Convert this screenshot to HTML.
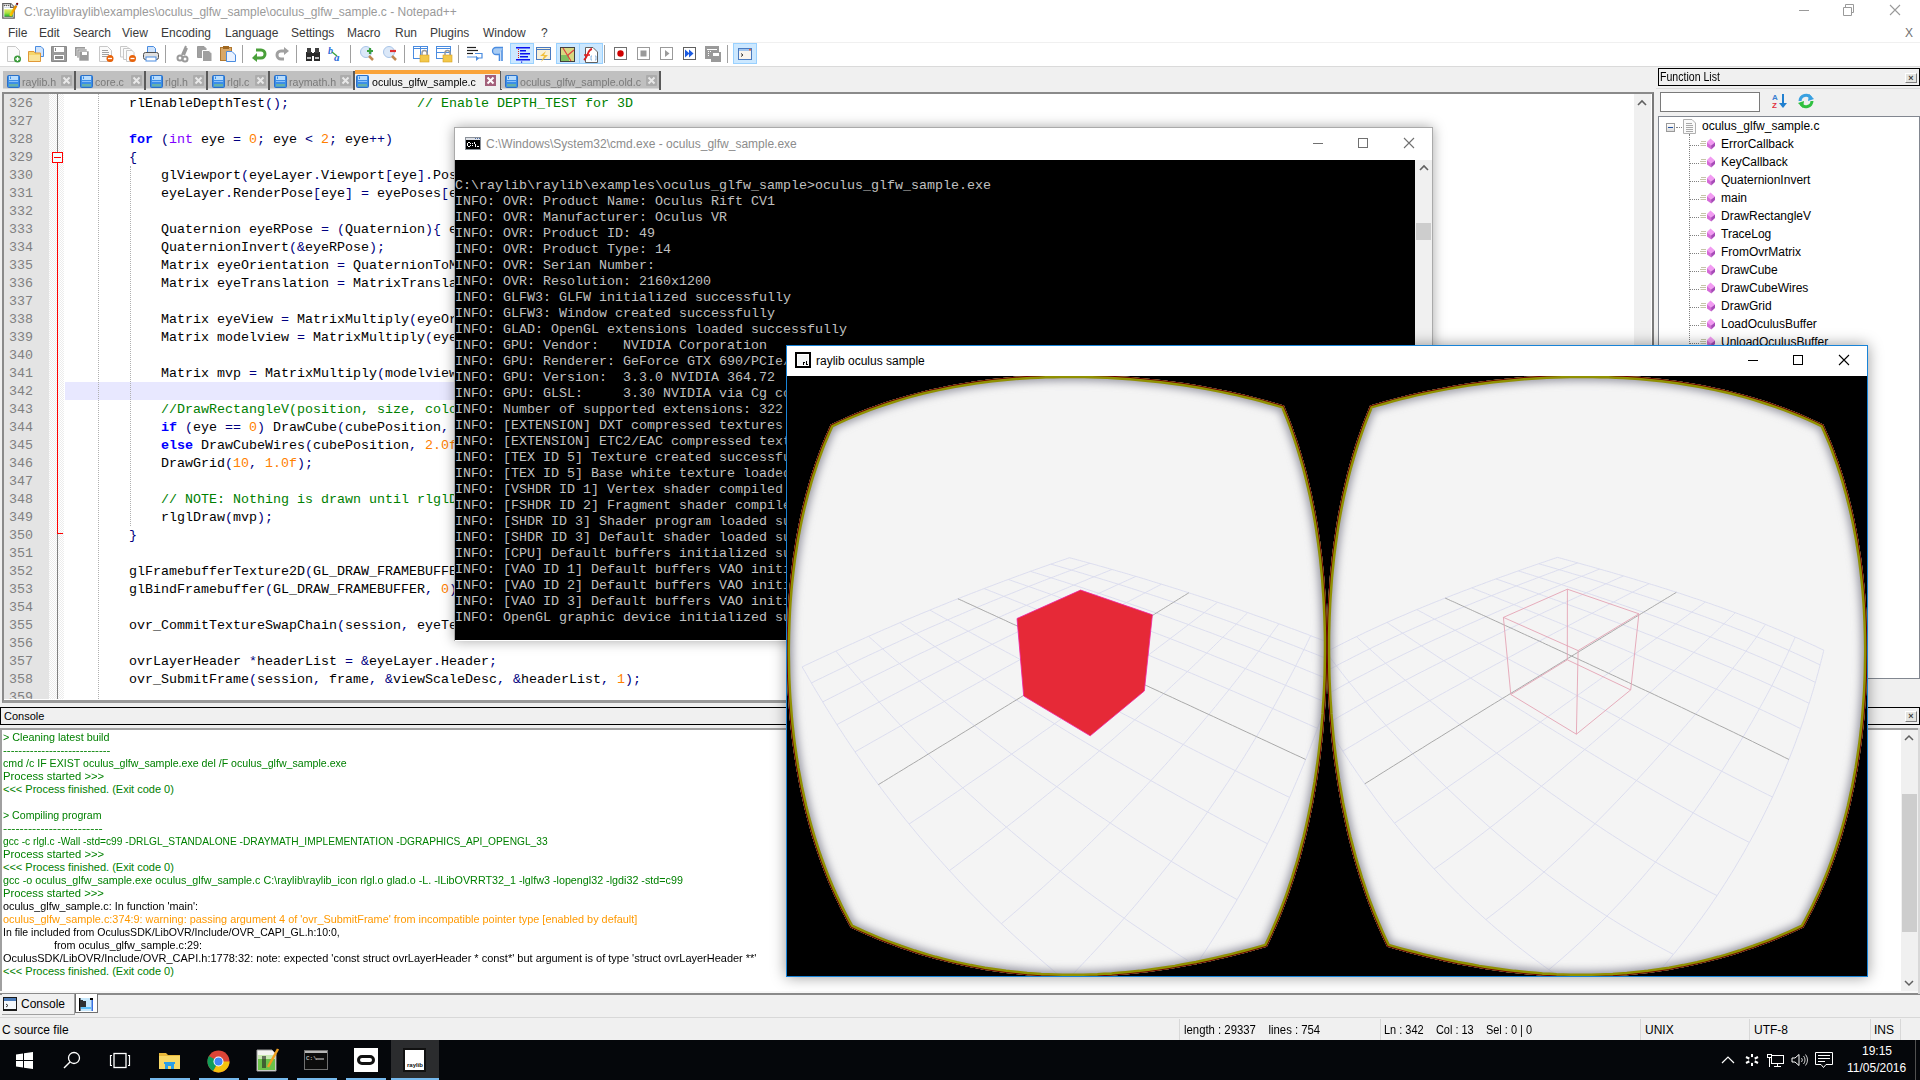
<!DOCTYPE html>
<html><head><meta charset="utf-8">
<style>
*{box-sizing:border-box}
html,body{margin:0;padding:0}
body{width:1920px;height:1080px;position:relative;overflow:hidden;background:#f0f0f0;font-family:"Liberation Sans",sans-serif;}
.a{position:absolute}
.mono{font-family:"Liberation Mono",monospace}
#title{left:0;top:0;width:1920px;height:42px;background:#fff}
#menu span{position:absolute;top:26px;font-size:12px;color:#3a3a3a}
#toolbar{left:0;top:43px;width:1920px;height:24px;background:#fff;border-bottom:1px solid #dadada}
.code{position:absolute;left:65px;height:18px;line-height:20px;font-size:13.33px;white-space:pre;font-family:"Liberation Mono",monospace;color:#000}
.ln{position:absolute;left:3px;width:30px;text-align:right;height:18px;line-height:20px;font-size:13.33px;font-family:"Liberation Mono",monospace;color:#808080}
.kw{color:#0000ff;font-weight:bold}
.ty{color:#8000ff}
.nu{color:#ff8000}
.op{color:#000080;font-weight:normal}
i{font-style:normal}
.cm{color:#008000}
.con{position:absolute;left:3px;height:13px;line-height:13px;font-size:11px;white-space:pre;color:#008000;transform-origin:0 0}
.fl{left:1721px;font-size:12px;line-height:16px;color:#000}
.cmdl{position:absolute;left:455px;height:16px;line-height:16px;font-size:13.33px;white-space:pre;font-family:"Liberation Mono",monospace;color:#c0c0c0}
</style></head><body>
<!-- Notepad++ title/menu -->
<div class="a" id="title"></div>
<svg class="a" style="left:0;top:0" width="22" height="22"><defs><linearGradient id="npg" x1="0" y1="0" x2="0" y2="1"><stop offset="0" stop-color="#e4e860"/><stop offset="0.5" stop-color="#a8e040"/><stop offset="0.85" stop-color="#40c030"/><stop offset="1" stop-color="#005000"/></linearGradient><linearGradient id="npp" x1="0" y1="0" x2="1" y2="0"><stop offset="0" stop-color="#ffd000"/><stop offset="1" stop-color="#e08000"/></linearGradient></defs>
<path d="M2.8 3.6H10.8L14.2 7V18.2H2.8Z" fill="#fff" stroke="#606060" stroke-width="1.3"/><path d="M10.5 3.6V7.4H14.2" fill="#f0f0f0" stroke="#606060" stroke-width="1.2"/>
<g fill="#606060"><circle cx="4.5" cy="5.5" r="0.8"/><circle cx="6.5" cy="5.5" r="0.8"/><circle cx="8.6" cy="5.5" r="0.8"/></g>
<rect x="4.3" y="7.2" width="5.5" height="0.8" fill="#c8d8e8"/>
<rect x="4.3" y="9.3" width="8.6" height="7.4" fill="url(#npg)"/>
<path d="M10.3 15.8L16.2 5.6" stroke="url(#npp)" stroke-width="2.6"/><path d="M16.2 5.6L17.2 3.8" stroke="#7090c0" stroke-width="2"/><circle cx="17.2" cy="3.8" r="1.1" fill="#800000"/></svg>
<div class="a" style="left:1799px;top:10px;width:10px;height:1px;background:#9a9a9a"></div>
<svg class="a" style="left:1843px;top:4px" width="12" height="12"><path d="M2.5 3.5V0.5H10.5V8.5H8.5 M0.5 3.5H8.5V11.5H0.5Z" fill="none" stroke="#9a9a9a"/></svg>
<svg class="a" style="left:1889px;top:4px" width="12" height="12"><path d="M1 1L11 11M11 1L1 11" stroke="#9a9a9a" stroke-width="1.1"/></svg>
<div class="a" style="left:1905px;top:25px;font-size:12px;line-height:16px;color:#707070">X</div>
<div class="a" style="left:24px;top:4px;font-size:12px;color:#9a9a9a;line-height:16px">C:\raylib\raylib\examples\oculus_glfw_sample\oculus_glfw_sample.c - Notepad++</div>
<div class="a" style="left:0;top:42px;width:1920px;height:1px;background:#f0f0f0"></div>
<div id="menu">
<span style="left:8px">File</span><span style="left:39px">Edit</span><span style="left:73px">Search</span><span style="left:122px">View</span><span style="left:161px">Encoding</span><span style="left:225px">Language</span><span style="left:291px">Settings</span><span style="left:347px">Macro</span><span style="left:395px">Run</span><span style="left:430px">Plugins</span><span style="left:483px">Window</span><span style="left:541px">?</span>
</div>
<div class="a" id="toolbar"></div>
<!--TOP-->
<svg class="a" style="left:0;top:0" width="780" height="70"><g transform="translate(6,46)"><path d="M1.5 0.5H9.5L13.5 4.5V15.5H1.5Z" fill="#fbfbfb" stroke="#c8c8c8"/><circle cx="11.5" cy="13" r="3.5" fill="#3a9a3a"/><path d="M9.5 13H13.5M11.5 11V15" stroke="#fff" stroke-width="1.3"/></g><g transform="translate(28,46)"><path d="M7.5 0.5H13L15.5 3V10.5H7.5Z" fill="#cfe3fb" stroke="#4a8ce0"/><path d="M0.5 5.5H6L7 7H12.5V15.5H0.5Z" fill="#f6d66a" stroke="#e09838"/><rect x="1" y="9" width="11" height="6" fill="#fae49a"/></g><g transform="translate(51,46)"><path d="M0.5 0.5H15.5V15.5H0.5Z" fill="#9a9a9a" stroke="#8a8a8a"/><rect x="3" y="1" width="10" height="5" fill="#fff"/><rect x="4" y="2" width="1" height="3" fill="#8a8a8a"/><rect x="3" y="9" width="10" height="5" fill="#fff"/><rect x="4" y="10" width="8" height="3" fill="#8a8a8a"/></g><g transform="translate(75,47)"><rect x="0" y="0" width="10" height="9" fill="#9a9a9a"/><rect x="2" y="2" width="10" height="9" fill="#9a9a9a" stroke="#fff" stroke-width="0.6"/><rect x="4" y="4" width="10" height="10" fill="#9a9a9a" stroke="#fff" stroke-width="0.6"/><rect x="7" y="5" width="5" height="3" fill="#fff"/></g><g transform="translate(98,46)"><path d="M1.5 0.5H9.5L13.5 4.5V15.5H1.5Z" fill="#fbfbfb" stroke="#c8c8c8"/><g stroke="#a0a0a0"><line x1="4" y1="4.5" x2="10" y2="4.5"/><line x1="4" y1="6.5" x2="11" y2="6.5"/><line x1="4" y1="8.5" x2="11" y2="8.5"/><line x1="4" y1="10.5" x2="9" y2="10.5"/></g><circle cx="12" cy="12.5" r="3.5" fill="#e8620a"/><path d="M10 12.5H14" stroke="#fff" stroke-width="1.3"/></g><g transform="translate(120,46)"><path d="M0.5 0.5H7L9 2.5V11H0.5Z" fill="#fbfbfb" stroke="#c8c8c8"/><path d="M3.5 2.5H10L12 4.5V13.5H3.5Z" fill="#fbfbfb" stroke="#c8c8c8"/><path d="M6.5 4.5H12L14 6.5V15.5H6.5Z" fill="#fbfbfb" stroke="#c8c8c8"/><circle cx="12.5" cy="12.5" r="3.5" fill="#e8620a"/><path d="M10.5 12.5H14.5" stroke="#fff" stroke-width="1.3"/></g><g transform="translate(143,46)"><path d="M4.5 0.5H10.5L12.5 2.5V7H4.5Z" fill="#cfe3fb" stroke="#4a8ce0"/><rect x="0.5" y="6.5" width="15" height="7" rx="2" fill="#e0e0e0" stroke="#505050"/><rect x="3" y="11" width="10" height="4" fill="#fff" stroke="#4a8ce0"/></g><rect x="165" y="45" width="1" height="18" fill="#a0a0a0"/><g transform="translate(176,46)"><path d="M10 0L6 9M11 2L8 9" stroke="#9a9a9a" stroke-width="2"/><circle cx="4" cy="12" r="2.5" fill="none" stroke="#9a9a9a" stroke-width="2"/><circle cx="9" cy="13" r="2.5" fill="none" stroke="#9a9a9a" stroke-width="2"/></g><g transform="translate(197,46)"><path d="M0.5 0.5H7L9 2.5V11.5H0.5Z" fill="#a0a0a0" stroke="#9a9a9a"/><path d="M5.5 4.5H12L15 7.5V15.5H5.5Z" fill="#a0a0a0" stroke="#fff"/></g><g transform="translate(220,46)"><rect x="0.5" y="1.5" width="11" height="13" fill="#d8a868" stroke="#b07830"/><rect x="3" y="0" width="6" height="3" fill="#a06820"/><path d="M6.5 5.5H12L15.5 9V15.5H6.5Z" fill="#eaf2ff" stroke="#4a8ce0"/></g><rect x="242" y="45" width="1" height="18" fill="#a0a0a0"/><g transform="translate(252,47)"><path d="M3 11H9A4 4 0 0 0 9 3H4" fill="none" stroke="#4aa03a" stroke-width="3"/><path d="M0 11L5 6V15Z" fill="#4aa03a"/></g><g transform="translate(275,47)"><path d="M11 4H6A4 4 0 0 0 6 12H9" fill="none" stroke="#a0a0a0" stroke-width="3"/><path d="M14 4L9 0V8Z" fill="#a0a0a0"/></g><rect x="296" y="45" width="1" height="18" fill="#a0a0a0"/><g transform="translate(306,47)"><rect x="0" y="5" width="6" height="9" fill="#2a2a2a"/><rect x="8" y="5" width="6" height="9" fill="#2a2a2a"/><rect x="1" y="1" width="4" height="5" fill="#404040"/><rect x="9" y="1" width="4" height="5" fill="#404040"/><rect x="5" y="6" width="4" height="3" fill="#2a2a2a"/><rect x="1" y="10" width="4" height="2" fill="#c0c0c0"/><rect x="9" y="10" width="4" height="2" fill="#c0c0c0"/></g><g transform="translate(328,46)"><text x="0" y="8" font-family="Liberation Serif" font-style="italic" font-weight="bold" font-size="10" fill="#2a6ad8">b</text><text x="6" y="15" font-family="Liberation Serif" font-style="italic" font-weight="bold" font-size="11" fill="#2a6ad8">a</text><path d="M4 6L9 10" stroke="#3aa040" stroke-width="1.5"/></g><rect x="350" y="45" width="1" height="18" fill="#a0a0a0"/><g transform="translate(360,46)"><circle cx="6" cy="6" r="5.5" fill="#dbe8f8" stroke="#a8c4e8"/><path d="M9 10L13 14" stroke="#c08850" stroke-width="2.5"/><path d="M7 5H13M10 2V8" stroke="#3aa040" stroke-width="2.2"/></g><g transform="translate(383,46)"><circle cx="6" cy="6" r="5.5" fill="#dbe8f8" stroke="#a8c4e8"/><path d="M9 10L13 14" stroke="#c08850" stroke-width="2.5"/><path d="M7 5H13" stroke="#e03030" stroke-width="2.2"/></g><rect x="404" y="45" width="1" height="18" fill="#a0a0a0"/><g transform="translate(413,46)"><rect x="0.5" y="0.5" width="14" height="12" fill="#fff" stroke="#4a8ce0"/><line x1="0.5" y1="2.5" x2="14.5" y2="2.5" stroke="#4a8ce0"/><line x1="7.5" y1="0" x2="7.5" y2="13" stroke="#4a8ce0"/><rect x="7" y="9" width="9" height="7" fill="#f2c84a" stroke="#d8a020" stroke-width="0.6"/><path d="M9 9V7A2.5 2.5 0 0 1 14 7V9" fill="none" stroke="#9a9a9a" stroke-width="1.5"/></g><g transform="translate(436,46)"><rect x="0.5" y="0.5" width="14" height="12" fill="#fff" stroke="#4a8ce0"/><line x1="0.5" y1="2.5" x2="14.5" y2="2.5" stroke="#4a8ce0"/><line x1="0" y1="6.5" x2="14" y2="6.5" stroke="#4a8ce0"/><rect x="7" y="9" width="9" height="7" fill="#f2c84a" stroke="#d8a020" stroke-width="0.6"/><path d="M9 9V7A2.5 2.5 0 0 1 14 7V9" fill="none" stroke="#9a9a9a" stroke-width="1.5"/></g><rect x="458" y="45" width="1" height="18" fill="#a0a0a0"/><g transform="translate(467,46)"><g stroke="#222" stroke-width="1.2"><line x1="0" y1="1.5" x2="9" y2="1.5"/><line x1="0" y1="4.5" x2="11" y2="4.5"/><line x1="0" y1="7.5" x2="6" y2="7.5"/></g><path d="M8 7.5H15V12H9" fill="none" stroke="#4a8ce0" stroke-width="1.2"/><rect x="0" y="10" width="10" height="2" fill="#a8c8f0"/><path d="M9 10L12 12.5L9 15Z" fill="#4a8ce0"/></g><g transform="translate(490,46)"><path d="M9.5 2V15M12 2V15" stroke="#4a8ce0" stroke-width="1.6"/><path d="M13 1.5H6A3.5 3.5 0 0 0 6 8.5H9" fill="#a8ccf4" stroke="#4a8ce0" stroke-width="1.3"/></g><rect x="510.5" y="43.5" width="23" height="20" fill="#cce8ff" stroke="#99d1ff"/><rect x="556.5" y="43.5" width="23" height="20" fill="#cce8ff" stroke="#99d1ff"/><rect x="579.5" y="43.5" width="23" height="20" fill="#cce8ff" stroke="#99d1ff"/><rect x="733.5" y="43.5" width="23" height="20" fill="#cce8ff" stroke="#99d1ff"/><g transform="translate(516,46)"><g fill="#0a10f0"><rect x="0" y="1" width="14" height="1.5"/><rect x="4" y="4" width="6" height="1.5"/><rect x="4" y="7" width="10" height="1.5"/><rect x="4" y="10" width="8" height="1.5"/><rect x="0" y="13" width="14" height="1.5"/><rect x="5" y="15.5" width="1.2" height="1.2"/></g><path d="M2.5 3V13" stroke="#e02020" stroke-dasharray="1 1"/></g><g transform="translate(536,47)"><rect x="0.5" y="0.5" width="14" height="12" fill="#f8f0d8" stroke="#4a7ac0"/><line x1="0.5" y1="2.5" x2="14.5" y2="2.5" stroke="#4a7ac0"/><path d="M10 4L4 9H8L5 15L12 8H8Z" fill="#f0c040"/></g><g transform="translate(560,47)"><rect x="0.5" y="0.5" width="14" height="14" fill="#d8d880" stroke="#404040"/><rect x="1" y="8" width="8" height="6" fill="#80c060"/><path d="M3 1L11 14M8 8L14 3" stroke="#e04040" stroke-width="1.2"/></g><g transform="translate(583,47)"><path d="M2.5 0.5H10L14.5 5V15.5H2.5Z" fill="#fff" stroke="#606060"/><path d="M9 2C4 3 6 9 1 13" fill="none" stroke="#e02020" stroke-width="1.8"/><line x1="1" y1="8" x2="7" y2="8" stroke="#e02020" stroke-width="1.5"/><path d="M9 9H8V13H9M12 9H13V13H12" fill="none" stroke="#80b0e0"/></g><rect x="604" y="45" width="1" height="18" fill="#a0a0a0"/><g transform="translate(614,47)"><rect x="0.5" y="0.5" width="12" height="12" fill="#fff" stroke="#707070"/><circle cx="6.5" cy="6.5" r="3.2" fill="#d00000"/></g><g transform="translate(637,47)"><rect x="0.5" y="0.5" width="12" height="12" fill="#fff" stroke="#9a9a9a"/><rect x="3.5" y="3.5" width="6" height="6" fill="#9a9a9a"/></g><g transform="translate(660,47)"><rect x="0.5" y="0.5" width="12" height="12" fill="#fff" stroke="#9a9a9a"/><path d="M5 3L9.5 6.5L5 10Z" fill="#9a9a9a"/></g><g transform="translate(683,47)"><rect x="0.5" y="0.5" width="12" height="12" fill="#fff" stroke="#606060"/><path d="M2 2.5L6.5 6.5L2 10.5Z M6 2.5L10.5 6.5L6 10.5Z" fill="#1a5ae0"/></g><g transform="translate(705,46)"><rect x="0" y="0" width="14" height="13" fill="#9a9a9a"/><rect x="6" y="6" width="10" height="10" fill="#9a9a9a"/><rect x="2" y="3" width="10" height="1" fill="#fff"/><g fill="#fff"><rect x="3" y="5" width="1" height="1"/><rect x="3" y="7" width="1" height="1"/><rect x="3" y="9" width="1" height="1"/><rect x="5" y="5" width="1" height="1"/></g><rect x="8" y="7" width="6" height="3" fill="#fff"/></g><rect x="727" y="45" width="1" height="18" fill="#a0a0a0"/><g transform="translate(738,48)"><rect x="0.5" y="0.5" width="13" height="11" fill="#f8f4ee" stroke="#4a7ac0"/><rect x="1" y="1" width="12" height="2" fill="#a0c4ec"/><rect x="11" y="1" width="2" height="1.5" fill="#f06030"/><path d="M3 5.5L5 7L3 8.5" fill="none" stroke="#333" stroke-width="1"/></g></svg>
<div class="a" style="left:3px;top:71px;width:71px;height:18px;background:#c0c0c0;border-bottom:1px solid #d8d8d8"></div>
<svg class="a" style="left:7px;top:75px" width="13" height="13"><rect x="0.5" y="0.5" width="12" height="12" rx="1" fill="#3c8ee8" stroke="#2a70c8"/><rect x="2" y="1" width="9" height="4" fill="#b8dcfc"/><rect x="3" y="1.5" width="1" height="2.5" fill="#3c8ee8"/><rect x="2" y="6" width="9" height="1" fill="#8ac0f8"/><rect x="2" y="9" width="9" height="2.5" fill="#66b0a8"/></svg>
<div class="a" style="left:22px;top:74px;font-size:11px;line-height:16px;transform:scaleX(0.965);transform-origin:0 0;color:#7a7a7a;white-space:nowrap">raylib.h</div>
<div class="a" style="left:61px;top:75px;width:11px;height:11px;background:#acacac;border-radius:1px"></div><svg class="a" style="left:61px;top:75px" width="11" height="11"><path d="M2.5 2.5L8.5 8.5M8.5 2.5L2.5 8.5" stroke="#e8e8e8" stroke-width="2"/></svg>
<div class="a" style="left:74px;top:71px;width:2px;height:19px;background:#5a5a5a"></div>
<div class="a" style="left:76px;top:71px;width:68px;height:18px;background:#c0c0c0;border-bottom:1px solid #d8d8d8"></div>
<svg class="a" style="left:80px;top:75px" width="13" height="13"><rect x="0.5" y="0.5" width="12" height="12" rx="1" fill="#3c8ee8" stroke="#2a70c8"/><rect x="2" y="1" width="9" height="4" fill="#b8dcfc"/><rect x="3" y="1.5" width="1" height="2.5" fill="#3c8ee8"/><rect x="2" y="6" width="9" height="1" fill="#8ac0f8"/><rect x="2" y="9" width="9" height="2.5" fill="#66b0a8"/></svg>
<div class="a" style="left:95px;top:74px;font-size:11px;line-height:16px;transform:scaleX(0.965);transform-origin:0 0;color:#7a7a7a;white-space:nowrap">core.c</div>
<div class="a" style="left:131px;top:75px;width:11px;height:11px;background:#acacac;border-radius:1px"></div><svg class="a" style="left:131px;top:75px" width="11" height="11"><path d="M2.5 2.5L8.5 8.5M8.5 2.5L2.5 8.5" stroke="#e8e8e8" stroke-width="2"/></svg>
<div class="a" style="left:144px;top:71px;width:2px;height:19px;background:#5a5a5a"></div>
<div class="a" style="left:146px;top:71px;width:60px;height:18px;background:#c0c0c0;border-bottom:1px solid #d8d8d8"></div>
<svg class="a" style="left:150px;top:75px" width="13" height="13"><rect x="0.5" y="0.5" width="12" height="12" rx="1" fill="#3c8ee8" stroke="#2a70c8"/><rect x="2" y="1" width="9" height="4" fill="#b8dcfc"/><rect x="3" y="1.5" width="1" height="2.5" fill="#3c8ee8"/><rect x="2" y="6" width="9" height="1" fill="#8ac0f8"/><rect x="2" y="9" width="9" height="2.5" fill="#66b0a8"/></svg>
<div class="a" style="left:165px;top:74px;font-size:11px;line-height:16px;transform:scaleX(0.965);transform-origin:0 0;color:#7a7a7a;white-space:nowrap">rlgl.h</div>
<div class="a" style="left:193px;top:75px;width:11px;height:11px;background:#acacac;border-radius:1px"></div><svg class="a" style="left:193px;top:75px" width="11" height="11"><path d="M2.5 2.5L8.5 8.5M8.5 2.5L2.5 8.5" stroke="#e8e8e8" stroke-width="2"/></svg>
<div class="a" style="left:206px;top:71px;width:2px;height:19px;background:#5a5a5a"></div>
<div class="a" style="left:208px;top:71px;width:60px;height:18px;background:#c0c0c0;border-bottom:1px solid #d8d8d8"></div>
<svg class="a" style="left:212px;top:75px" width="13" height="13"><rect x="0.5" y="0.5" width="12" height="12" rx="1" fill="#3c8ee8" stroke="#2a70c8"/><rect x="2" y="1" width="9" height="4" fill="#b8dcfc"/><rect x="3" y="1.5" width="1" height="2.5" fill="#3c8ee8"/><rect x="2" y="6" width="9" height="1" fill="#8ac0f8"/><rect x="2" y="9" width="9" height="2.5" fill="#66b0a8"/></svg>
<div class="a" style="left:227px;top:74px;font-size:11px;line-height:16px;transform:scaleX(0.965);transform-origin:0 0;color:#7a7a7a;white-space:nowrap">rlgl.c</div>
<div class="a" style="left:255px;top:75px;width:11px;height:11px;background:#acacac;border-radius:1px"></div><svg class="a" style="left:255px;top:75px" width="11" height="11"><path d="M2.5 2.5L8.5 8.5M8.5 2.5L2.5 8.5" stroke="#e8e8e8" stroke-width="2"/></svg>
<div class="a" style="left:268px;top:71px;width:2px;height:19px;background:#5a5a5a"></div>
<div class="a" style="left:270px;top:71px;width:83px;height:18px;background:#c0c0c0;border-bottom:1px solid #d8d8d8"></div>
<svg class="a" style="left:274px;top:75px" width="13" height="13"><rect x="0.5" y="0.5" width="12" height="12" rx="1" fill="#3c8ee8" stroke="#2a70c8"/><rect x="2" y="1" width="9" height="4" fill="#b8dcfc"/><rect x="3" y="1.5" width="1" height="2.5" fill="#3c8ee8"/><rect x="2" y="6" width="9" height="1" fill="#8ac0f8"/><rect x="2" y="9" width="9" height="2.5" fill="#66b0a8"/></svg>
<div class="a" style="left:289px;top:74px;font-size:11px;line-height:16px;transform:scaleX(0.965);transform-origin:0 0;color:#7a7a7a;white-space:nowrap">raymath.h</div>
<div class="a" style="left:340px;top:75px;width:11px;height:11px;background:#acacac;border-radius:1px"></div><svg class="a" style="left:340px;top:75px" width="11" height="11"><path d="M2.5 2.5L8.5 8.5M8.5 2.5L2.5 8.5" stroke="#e8e8e8" stroke-width="2"/></svg>
<div class="a" style="left:353px;top:71px;width:2px;height:19px;background:#5a5a5a"></div>
<div class="a" style="left:355px;top:70px;width:145px;height:20px;background:#f0f0f0"></div>
<div class="a" style="left:355px;top:70px;width:145px;height:4px;background:#f9a33a"></div>
<svg class="a" style="left:356px;top:75px" width="13" height="13"><rect x="0.5" y="0.5" width="12" height="12" rx="1" fill="#3c8ee8" stroke="#2a70c8"/><rect x="2" y="1" width="9" height="4" fill="#b8dcfc"/><rect x="3" y="1.5" width="1" height="2.5" fill="#3c8ee8"/><rect x="2" y="6" width="9" height="1" fill="#8ac0f8"/><rect x="2" y="9" width="9" height="2.5" fill="#66b0a8"/></svg>
<div class="a" style="left:372px;top:74px;font-size:11px;line-height:16px;transform:scaleX(0.965);transform-origin:0 0;color:#000;white-space:nowrap">oculus_glfw_sample.c</div>
<div class="a" style="left:485px;top:75px;width:11px;height:11px;background:#a3607a"></div><svg class="a" style="left:485px;top:75px" width="11" height="11"><path d="M2.5 2.5L8.5 8.5M8.5 2.5L2.5 8.5" stroke="#fff" stroke-width="2"/></svg>
<div class="a" style="left:500px;top:71px;width:2px;height:19px;background:#5a5a5a"></div>
<div class="a" style="left:501px;top:71px;width:158px;height:18px;background:#c0c0c0;border-bottom:1px solid #d8d8d8"></div>
<svg class="a" style="left:505px;top:75px" width="13" height="13"><rect x="0.5" y="0.5" width="12" height="12" rx="1" fill="#3c8ee8" stroke="#2a70c8"/><rect x="2" y="1" width="9" height="4" fill="#b8dcfc"/><rect x="3" y="1.5" width="1" height="2.5" fill="#3c8ee8"/><rect x="2" y="6" width="9" height="1" fill="#8ac0f8"/><rect x="2" y="9" width="9" height="2.5" fill="#66b0a8"/></svg>
<div class="a" style="left:520px;top:74px;font-size:11px;line-height:16px;transform:scaleX(0.965);transform-origin:0 0;color:#7a7a7a;white-space:nowrap">oculus_glfw_sample.old.c</div>
<div class="a" style="left:646px;top:75px;width:11px;height:11px;background:#acacac;border-radius:1px"></div><svg class="a" style="left:646px;top:75px" width="11" height="11"><path d="M2.5 2.5L8.5 8.5M8.5 2.5L2.5 8.5" stroke="#e8e8e8" stroke-width="2"/></svg>
<div class="a" style="left:659px;top:71px;width:2px;height:19px;background:#5a5a5a"></div>
<!--/TOP-->

<!-- editor -->
<div class="a" id="editor" style="left:2px;top:92px;width:1652px;height:611px;border:2px solid #8a8a8a;border-right-color:#7a7a7a;border-bottom:3px solid #9a9a9a;background:#fff;overflow:hidden"></div>
<div class="a" style="left:4px;top:94px;width:46px;height:605px;background:#e4e4e4"></div>
<div class="a" style="left:49px;top:94px;width:15px;height:605px;background-image:conic-gradient(#ececec 25%,#fff 0 50%,#ececec 0 75%,#fff 0);background-size:2px 2px"></div>
<div class="a" style="left:65px;top:382px;width:1587px;height:18px;background:#e8e8ff"></div>
<div class="a" style="left:98px;top:94px;width:1px;height:605px;border-left:1px dotted #b0b0b0"></div>
<div class="a" style="left:130px;top:166px;width:1px;height:360px;border-left:1px dotted #b0b0b0"></div>
<div class="a" style="left:57px;top:94px;width:1px;height:58px;background:#808080"></div>
<div class="a" style="left:57px;top:162px;width:1px;height:372px;background:#ff0000"></div>
<div class="a" style="left:57px;top:533px;width:6px;height:1px;background:#ff0000"></div>
<div class="a" style="left:57px;top:534px;width:1px;height:165px;background:#808080"></div>
<div class="a" style="left:52px;top:152px;width:11px;height:11px;border:1px solid #ff0000;background:#f4ffff"></div>
<div class="a" style="left:54px;top:157px;width:7px;height:1px;background:#ff0000"></div>
<div class="a" style="left:0;top:0;width:1652px;height:699px;overflow:hidden">
<div class="ln" style="top:94px">326</div>
<div class="code" style="top:94px">        rlEnableDepthTest<b class="op">(</b><b class="op">)</b><b class="op">;</b>                <i class="cm">// Enable DEPTH_TEST for 3D</i></div>
<div class="ln" style="top:112px">327</div>
<div class="ln" style="top:130px">328</div>
<div class="code" style="top:130px">        <b class="kw">for</b> <b class="op">(</b><i class="ty">int</i> eye <b class="op">=</b> <i class="nu">0</i><b class="op">;</b> eye <b class="op">&lt;</b> <i class="nu">2</i><b class="op">;</b> eye<b class="op">+</b><b class="op">+</b><b class="op">)</b></div>
<div class="ln" style="top:148px">329</div>
<div class="code" style="top:148px">        <b class="op">{</b></div>
<div class="ln" style="top:166px">330</div>
<div class="code" style="top:166px">            glViewport<b class="op">(</b>eyeLayer<b class="op">.</b>Viewport<b class="op">[</b>eye<b class="op">]</b><b class="op">.</b>Pos<b class="op">.</b>x<b class="op">,</b> eyeLayer<b class="op">.</b>Viewport<b class="op">[</b>eye<b class="op">]</b><b class="op">.</b>Pos<b class="op">.</b>y<b class="op">,</b> eyeLayer<b class="op">.</b>Viewport<b class="op">[</b>eye<b class="op">]</b><b class="op">.</b>Size<b class="op">.</b>w<b class="op">,</b> eyeLayer<b class="op">.</b>Viewport<b class="op">[</b>eye<b class="op">]</b><b class="op">.</b>Size<b class="op">.</b>h<b class="op">)</b><b class="op">;</b></div>
<div class="ln" style="top:184px">331</div>
<div class="code" style="top:184px">            eyeLayer<b class="op">.</b>RenderPose<b class="op">[</b>eye<b class="op">]</b> <b class="op">=</b> eyePoses<b class="op">[</b>eye<b class="op">]</b><b class="op">;</b></div>
<div class="ln" style="top:202px">332</div>
<div class="ln" style="top:220px">333</div>
<div class="code" style="top:220px">            Quaternion eyeRPose <b class="op">=</b> <b class="op">(</b>Quaternion<b class="op">)</b><b class="op">{</b> eyePoses<b class="op">[</b>eye<b class="op">]</b><b class="op">.</b>Orientation<b class="op">.</b>x<b class="op">,</b> eyePoses<b class="op">[</b>eye<b class="op">]</b><b class="op">.</b>Orientation<b class="op">.</b>y<b class="op">,</b> eyePoses<b class="op">[</b>eye<b class="op">]</b><b class="op">.</b>Orientation<b class="op">.</b>z<b class="op">,</b> eyePoses<b class="op">[</b>eye<b class="op">]</b><b class="op">.</b>Orientation<b class="op">.</b>w <b class="op">}</b><b class="op">;</b></div>
<div class="ln" style="top:238px">334</div>
<div class="code" style="top:238px">            QuaternionInvert<b class="op">(</b><b class="op">&amp;</b>eyeRPose<b class="op">)</b><b class="op">;</b></div>
<div class="ln" style="top:256px">335</div>
<div class="code" style="top:256px">            Matrix eyeOrientation <b class="op">=</b> QuaternionToMatrix<b class="op">(</b>eyeRPose<b class="op">)</b><b class="op">;</b></div>
<div class="ln" style="top:274px">336</div>
<div class="code" style="top:274px">            Matrix eyeTranslation <b class="op">=</b> MatrixTranslate<b class="op">(</b><b class="op">-</b>eyePoses<b class="op">[</b>eye<b class="op">]</b><b class="op">.</b>Position<b class="op">.</b>x<b class="op">,</b> <b class="op">-</b>eyePoses<b class="op">[</b>eye<b class="op">]</b><b class="op">.</b>Position<b class="op">.</b>y<b class="op">,</b> <b class="op">-</b>eyePoses<b class="op">[</b>eye<b class="op">]</b><b class="op">.</b>Position<b class="op">.</b>z<b class="op">)</b><b class="op">;</b></div>
<div class="ln" style="top:292px">337</div>
<div class="ln" style="top:310px">338</div>
<div class="code" style="top:310px">            Matrix eyeView <b class="op">=</b> MatrixMultiply<b class="op">(</b>eyeOrientation<b class="op">,</b> eyeTranslation<b class="op">)</b><b class="op">;</b></div>
<div class="ln" style="top:328px">339</div>
<div class="code" style="top:328px">            Matrix modelview <b class="op">=</b> MatrixMultiply<b class="op">(</b>eyeView<b class="op">,</b> view<b class="op">)</b><b class="op">;</b></div>
<div class="ln" style="top:346px">340</div>
<div class="ln" style="top:364px">341</div>
<div class="code" style="top:364px">            Matrix mvp <b class="op">=</b> MatrixMultiply<b class="op">(</b>modelview<b class="op">,</b> eyeProjection<b class="op">)</b><b class="op">;</b></div>
<div class="ln" style="top:382px">342</div>
<div class="ln" style="top:400px">343</div>
<div class="code" style="top:400px">            <i class="cm">//DrawRectangleV(position, size, color);</i></div>
<div class="ln" style="top:418px">344</div>
<div class="code" style="top:418px">            <b class="kw">if</b> <b class="op">(</b>eye <b class="op">=</b><b class="op">=</b> <i class="nu">0</i><b class="op">)</b> DrawCube<b class="op">(</b>cubePosition<b class="op">,</b> <i class="nu">2.0f</i><b class="op">,</b> <i class="nu">2.0f</i><b class="op">,</b> <i class="nu">2.0f</i><b class="op">,</b> RED<b class="op">)</b><b class="op">;</b></div>
<div class="ln" style="top:436px">345</div>
<div class="code" style="top:436px">            <b class="kw">else</b> DrawCubeWires<b class="op">(</b>cubePosition<b class="op">,</b> <i class="nu">2.0f</i><b class="op">,</b> <i class="nu">2.0f</i><b class="op">,</b> <i class="nu">2.0f</i><b class="op">,</b> RED<b class="op">)</b><b class="op">;</b></div>
<div class="ln" style="top:454px">346</div>
<div class="code" style="top:454px">            DrawGrid<b class="op">(</b><i class="nu">10</i><b class="op">,</b> <i class="nu">1.0f</i><b class="op">)</b><b class="op">;</b></div>
<div class="ln" style="top:472px">347</div>
<div class="ln" style="top:490px">348</div>
<div class="code" style="top:490px">            <i class="cm">// NOTE: Nothing is drawn until rlglDraw()</i></div>
<div class="ln" style="top:508px">349</div>
<div class="code" style="top:508px">            rlglDraw<b class="op">(</b>mvp<b class="op">)</b><b class="op">;</b></div>
<div class="ln" style="top:526px">350</div>
<div class="code" style="top:526px">        <b class="op">}</b></div>
<div class="ln" style="top:544px">351</div>
<div class="ln" style="top:562px">352</div>
<div class="code" style="top:562px">        glFramebufferTexture2D<b class="op">(</b>GL_DRAW_FRAMEBUFFER<b class="op">,</b> GL_COLOR_ATTACHMENT0<b class="op">,</b> GL_TEXTURE_2D<b class="op">,</b> <i class="nu">0</i><b class="op">,</b> <i class="nu">0</i><b class="op">)</b><b class="op">;</b></div>
<div class="ln" style="top:580px">353</div>
<div class="code" style="top:580px">        glBindFramebuffer<b class="op">(</b>GL_DRAW_FRAMEBUFFER<b class="op">,</b> <i class="nu">0</i><b class="op">)</b><b class="op">;</b></div>
<div class="ln" style="top:598px">354</div>
<div class="ln" style="top:616px">355</div>
<div class="code" style="top:616px">        ovr_CommitTextureSwapChain<b class="op">(</b>session<b class="op">,</b> eyeTexture<b class="op">)</b><b class="op">;</b></div>
<div class="ln" style="top:634px">356</div>
<div class="ln" style="top:652px">357</div>
<div class="code" style="top:652px">        ovrLayerHeader <b class="op">*</b>headerList <b class="op">=</b> <b class="op">&amp;</b>eyeLayer<b class="op">.</b>Header<b class="op">;</b></div>
<div class="ln" style="top:670px">358</div>
<div class="code" style="top:670px">        ovr_SubmitFrame<b class="op">(</b>session<b class="op">,</b> frame<b class="op">,</b> <b class="op">&amp;</b>viewScaleDesc<b class="op">,</b> <b class="op">&amp;</b>headerList<b class="op">,</b> <i class="nu">1</i><b class="op">)</b><b class="op">;</b></div>
<div class="ln" style="top:688px">359</div>
</div>

<div class="a" style="left:1634px;top:94px;width:17px;height:605px;background:#f0f0f0"></div>
<svg class="a" style="left:1636px;top:99px" width="12" height="8"><polyline points="2,6 6,2 10,6" fill="none" stroke="#606060" stroke-width="1.6"/></svg>
<!-- Function list -->
<div class="a" style="left:1656px;top:67px;width:264px;height:614px;background:#f0f0f0"></div>
<div class="a" style="left:1658px;top:68px;width:262px;height:18px;border:1px solid #000;background:#f0f0f0"></div>
<div class="a" style="left:1660px;top:69px;font-size:12px;line-height:16px;color:#000;transform:scaleX(0.88);transform-origin:0 0">Function List</div>
<div class="a" style="left:1905px;top:73px;width:12px;height:10px;background:#e4e4e0;border:1px solid;border-color:#fff #808080 #808080 #fff;font:bold 9px 'Liberation Sans',sans-serif;line-height:8px;text-align:center;color:#404040">&#215;</div>
<div class="a" style="left:1656px;top:88px;width:264px;height:1px;background:#dcdcdc"></div>
<div class="a" style="left:1660px;top:92px;width:100px;height:20px;background:#fff;border:1px solid #7a7a7a"></div>
<svg class="a" style="left:1772px;top:93px" width="16" height="16"><text x="0" y="7" font-family="Liberation Sans" font-weight="bold" font-size="8" fill="#3b7fd0">A</text><text x="0" y="15" font-family="Liberation Sans" font-weight="bold" font-size="8" fill="#e03040">Z</text><line x1="11" y1="1" x2="11" y2="13" stroke="#2080d0" stroke-width="2"/><polygon points="7,10 15,10 11,15" fill="#2080d0"/></svg>
<svg class="a" style="left:1797px;top:93px" width="18" height="16"><path d="M3 8 A6 6 0 0 1 14 5" fill="none" stroke="#3aa0e0" stroke-width="3"/><polygon points="12,1 17,6 11,8" fill="#3aa0e0"/><path d="M15 8 A6 6 0 0 1 4 11" fill="none" stroke="#30c040" stroke-width="3"/><polygon points="6,15 1,10 7,8" fill="#30c040"/></svg>
<div class="a" style="left:1658px;top:116px;width:262px;height:563px;background:#fff;border:1px solid #828790;overflow:hidden">
</div>
<div class="a" style="left:1666px;top:123px;width:9px;height:9px;border:1px solid #9a9a9a;background:linear-gradient(#fff,#dcdcdc)"></div>
<div class="a" style="left:1668px;top:127px;width:5px;height:1px;background:#2050a0"></div>
<div class="a" style="left:1676px;top:127px;width:6px;height:1px;border-top:1px dotted #808080"></div>
<svg class="a" style="left:1682px;top:118px" width="15" height="17"><path d="M1.5 1.5H10L13.5 5V15.5H1.5Z" fill="#fafafa" stroke="#b0b0b0"/><g stroke="#a8a8a8"><line x1="4" y1="5.5" x2="10" y2="5.5"/><line x1="4" y1="7.5" x2="11" y2="7.5"/><line x1="4" y1="9.5" x2="11" y2="9.5"/><line x1="4" y1="11.5" x2="11" y2="11.5"/><line x1="4" y1="13.5" x2="11" y2="13.5"/></g></svg>
<div class="a" style="left:1702px;top:118px;font-size:12px;line-height:16px;color:#000">oculus_glfw_sample.c</div>
<div class="a" style="left:1689px;top:134px;width:1px;height:546px;border-left:1px dotted #808080"></div>
<svg class="a" style="left:1698px;top:138px" width="18" height="13"><g stroke="#c4c4a8" stroke-width="1"><line x1="3" y1="3.5" x2="8" y2="3.5"/><line x1="2" y1="5.5" x2="8" y2="5.5"/><line x1="2.5" y1="7.5" x2="8" y2="7.5"/></g><polygon points="12.5,0.5 17,4.5 13,7.5 9,4" fill="#f29af2"/><polygon points="9,4 13,7.5 13.3,11.5 9,8.5" fill="#d66ad8"/><polygon points="13,7.5 17,4.5 17,8 13.3,11.5" fill="#a84ab8"/></svg>
<div class="a" style="left:1690px;top:145px;width:9px;height:1px;border-top:1px dotted #808080"></div>
<div class="a fl" style="top:136px">ErrorCallback</div>
<svg class="a" style="left:1698px;top:156px" width="18" height="13"><g stroke="#c4c4a8" stroke-width="1"><line x1="3" y1="3.5" x2="8" y2="3.5"/><line x1="2" y1="5.5" x2="8" y2="5.5"/><line x1="2.5" y1="7.5" x2="8" y2="7.5"/></g><polygon points="12.5,0.5 17,4.5 13,7.5 9,4" fill="#f29af2"/><polygon points="9,4 13,7.5 13.3,11.5 9,8.5" fill="#d66ad8"/><polygon points="13,7.5 17,4.5 17,8 13.3,11.5" fill="#a84ab8"/></svg>
<div class="a" style="left:1690px;top:163px;width:9px;height:1px;border-top:1px dotted #808080"></div>
<div class="a fl" style="top:154px">KeyCallback</div>
<svg class="a" style="left:1698px;top:174px" width="18" height="13"><g stroke="#c4c4a8" stroke-width="1"><line x1="3" y1="3.5" x2="8" y2="3.5"/><line x1="2" y1="5.5" x2="8" y2="5.5"/><line x1="2.5" y1="7.5" x2="8" y2="7.5"/></g><polygon points="12.5,0.5 17,4.5 13,7.5 9,4" fill="#f29af2"/><polygon points="9,4 13,7.5 13.3,11.5 9,8.5" fill="#d66ad8"/><polygon points="13,7.5 17,4.5 17,8 13.3,11.5" fill="#a84ab8"/></svg>
<div class="a" style="left:1690px;top:181px;width:9px;height:1px;border-top:1px dotted #808080"></div>
<div class="a fl" style="top:172px">QuaternionInvert</div>
<svg class="a" style="left:1698px;top:192px" width="18" height="13"><g stroke="#c4c4a8" stroke-width="1"><line x1="3" y1="3.5" x2="8" y2="3.5"/><line x1="2" y1="5.5" x2="8" y2="5.5"/><line x1="2.5" y1="7.5" x2="8" y2="7.5"/></g><polygon points="12.5,0.5 17,4.5 13,7.5 9,4" fill="#f29af2"/><polygon points="9,4 13,7.5 13.3,11.5 9,8.5" fill="#d66ad8"/><polygon points="13,7.5 17,4.5 17,8 13.3,11.5" fill="#a84ab8"/></svg>
<div class="a" style="left:1690px;top:199px;width:9px;height:1px;border-top:1px dotted #808080"></div>
<div class="a fl" style="top:190px">main</div>
<svg class="a" style="left:1698px;top:210px" width="18" height="13"><g stroke="#c4c4a8" stroke-width="1"><line x1="3" y1="3.5" x2="8" y2="3.5"/><line x1="2" y1="5.5" x2="8" y2="5.5"/><line x1="2.5" y1="7.5" x2="8" y2="7.5"/></g><polygon points="12.5,0.5 17,4.5 13,7.5 9,4" fill="#f29af2"/><polygon points="9,4 13,7.5 13.3,11.5 9,8.5" fill="#d66ad8"/><polygon points="13,7.5 17,4.5 17,8 13.3,11.5" fill="#a84ab8"/></svg>
<div class="a" style="left:1690px;top:217px;width:9px;height:1px;border-top:1px dotted #808080"></div>
<div class="a fl" style="top:208px">DrawRectangleV</div>
<svg class="a" style="left:1698px;top:228px" width="18" height="13"><g stroke="#c4c4a8" stroke-width="1"><line x1="3" y1="3.5" x2="8" y2="3.5"/><line x1="2" y1="5.5" x2="8" y2="5.5"/><line x1="2.5" y1="7.5" x2="8" y2="7.5"/></g><polygon points="12.5,0.5 17,4.5 13,7.5 9,4" fill="#f29af2"/><polygon points="9,4 13,7.5 13.3,11.5 9,8.5" fill="#d66ad8"/><polygon points="13,7.5 17,4.5 17,8 13.3,11.5" fill="#a84ab8"/></svg>
<div class="a" style="left:1690px;top:235px;width:9px;height:1px;border-top:1px dotted #808080"></div>
<div class="a fl" style="top:226px">TraceLog</div>
<svg class="a" style="left:1698px;top:246px" width="18" height="13"><g stroke="#c4c4a8" stroke-width="1"><line x1="3" y1="3.5" x2="8" y2="3.5"/><line x1="2" y1="5.5" x2="8" y2="5.5"/><line x1="2.5" y1="7.5" x2="8" y2="7.5"/></g><polygon points="12.5,0.5 17,4.5 13,7.5 9,4" fill="#f29af2"/><polygon points="9,4 13,7.5 13.3,11.5 9,8.5" fill="#d66ad8"/><polygon points="13,7.5 17,4.5 17,8 13.3,11.5" fill="#a84ab8"/></svg>
<div class="a" style="left:1690px;top:253px;width:9px;height:1px;border-top:1px dotted #808080"></div>
<div class="a fl" style="top:244px">FromOvrMatrix</div>
<svg class="a" style="left:1698px;top:264px" width="18" height="13"><g stroke="#c4c4a8" stroke-width="1"><line x1="3" y1="3.5" x2="8" y2="3.5"/><line x1="2" y1="5.5" x2="8" y2="5.5"/><line x1="2.5" y1="7.5" x2="8" y2="7.5"/></g><polygon points="12.5,0.5 17,4.5 13,7.5 9,4" fill="#f29af2"/><polygon points="9,4 13,7.5 13.3,11.5 9,8.5" fill="#d66ad8"/><polygon points="13,7.5 17,4.5 17,8 13.3,11.5" fill="#a84ab8"/></svg>
<div class="a" style="left:1690px;top:271px;width:9px;height:1px;border-top:1px dotted #808080"></div>
<div class="a fl" style="top:262px">DrawCube</div>
<svg class="a" style="left:1698px;top:282px" width="18" height="13"><g stroke="#c4c4a8" stroke-width="1"><line x1="3" y1="3.5" x2="8" y2="3.5"/><line x1="2" y1="5.5" x2="8" y2="5.5"/><line x1="2.5" y1="7.5" x2="8" y2="7.5"/></g><polygon points="12.5,0.5 17,4.5 13,7.5 9,4" fill="#f29af2"/><polygon points="9,4 13,7.5 13.3,11.5 9,8.5" fill="#d66ad8"/><polygon points="13,7.5 17,4.5 17,8 13.3,11.5" fill="#a84ab8"/></svg>
<div class="a" style="left:1690px;top:289px;width:9px;height:1px;border-top:1px dotted #808080"></div>
<div class="a fl" style="top:280px">DrawCubeWires</div>
<svg class="a" style="left:1698px;top:300px" width="18" height="13"><g stroke="#c4c4a8" stroke-width="1"><line x1="3" y1="3.5" x2="8" y2="3.5"/><line x1="2" y1="5.5" x2="8" y2="5.5"/><line x1="2.5" y1="7.5" x2="8" y2="7.5"/></g><polygon points="12.5,0.5 17,4.5 13,7.5 9,4" fill="#f29af2"/><polygon points="9,4 13,7.5 13.3,11.5 9,8.5" fill="#d66ad8"/><polygon points="13,7.5 17,4.5 17,8 13.3,11.5" fill="#a84ab8"/></svg>
<div class="a" style="left:1690px;top:307px;width:9px;height:1px;border-top:1px dotted #808080"></div>
<div class="a fl" style="top:298px">DrawGrid</div>
<svg class="a" style="left:1698px;top:318px" width="18" height="13"><g stroke="#c4c4a8" stroke-width="1"><line x1="3" y1="3.5" x2="8" y2="3.5"/><line x1="2" y1="5.5" x2="8" y2="5.5"/><line x1="2.5" y1="7.5" x2="8" y2="7.5"/></g><polygon points="12.5,0.5 17,4.5 13,7.5 9,4" fill="#f29af2"/><polygon points="9,4 13,7.5 13.3,11.5 9,8.5" fill="#d66ad8"/><polygon points="13,7.5 17,4.5 17,8 13.3,11.5" fill="#a84ab8"/></svg>
<div class="a" style="left:1690px;top:325px;width:9px;height:1px;border-top:1px dotted #808080"></div>
<div class="a fl" style="top:316px">LoadOculusBuffer</div>
<svg class="a" style="left:1698px;top:336px" width="18" height="13"><g stroke="#c4c4a8" stroke-width="1"><line x1="3" y1="3.5" x2="8" y2="3.5"/><line x1="2" y1="5.5" x2="8" y2="5.5"/><line x1="2.5" y1="7.5" x2="8" y2="7.5"/></g><polygon points="12.5,0.5 17,4.5 13,7.5 9,4" fill="#f29af2"/><polygon points="9,4 13,7.5 13.3,11.5 9,8.5" fill="#d66ad8"/><polygon points="13,7.5 17,4.5 17,8 13.3,11.5" fill="#a84ab8"/></svg>
<div class="a" style="left:1690px;top:343px;width:9px;height:1px;border-top:1px dotted #808080"></div>
<div class="a fl" style="top:334px">UnloadOculusBuffer</div>
<svg class="a" style="left:1698px;top:354px" width="18" height="13"><g stroke="#c4c4a8" stroke-width="1"><line x1="3" y1="3.5" x2="8" y2="3.5"/><line x1="2" y1="5.5" x2="8" y2="5.5"/><line x1="2.5" y1="7.5" x2="8" y2="7.5"/></g><polygon points="12.5,0.5 17,4.5 13,7.5 9,4" fill="#f29af2"/><polygon points="9,4 13,7.5 13.3,11.5 9,8.5" fill="#d66ad8"/><polygon points="13,7.5 17,4.5 17,8 13.3,11.5" fill="#a84ab8"/></svg>
<div class="a" style="left:1690px;top:361px;width:9px;height:1px;border-top:1px dotted #808080"></div>

<!-- console -->
<div class="a" style="left:0;top:707px;width:1920px;height:18px;border:1px solid #000;background:#f0f0f0"></div>
<div class="a" style="left:4px;top:709px;font-size:11px;line-height:14px">Console</div>
<div class="a" style="left:0;top:728px;width:1920px;height:264px;background:#fff;border-top:2px solid #a0a0a0;border-left:2px solid #a0a0a0"></div>
<div class="con" id="con0" style="top:731px;transform:scaleX(0.981);color:#008000">&gt; Cleaning latest build</div>
<div class="con" id="con1" style="top:744px;transform:scaleX(1.047);color:#008000">----------------------------</div>
<div class="con" id="con2" style="top:757px;transform:scaleX(0.965);color:#008000">cmd /c IF EXIST oculus_glfw_sample.exe del /F oculus_glfw_sample.exe</div>
<div class="con" id="con3" style="top:770px;transform:scaleX(1.024);color:#008000">Process started &gt;&gt;&gt;</div>
<div class="con" id="con4" style="top:783px;transform:scaleX(1.000);color:#008000">&lt;&lt;&lt; Process finished. (Exit code 0)</div>
<div class="con" id="con6" style="top:809px;transform:scaleX(0.962);color:#008000">&gt; Compiling program</div>
<div class="con" id="con7" style="top:822px;transform:scaleX(1.134);color:#008000">------------------------</div>
<div class="con" id="con8" style="top:835px;transform:scaleX(0.927);color:#008000">gcc -c rlgl.c -Wall -std=c99 -DRLGL_STANDALONE -DRAYMATH_IMPLEMENTATION -DGRAPHICS_API_OPENGL_33</div>
<div class="con" id="con9" style="top:848px;transform:scaleX(1.024);color:#008000">Process started &gt;&gt;&gt;</div>
<div class="con" id="con10" style="top:861px;transform:scaleX(1.000);color:#008000">&lt;&lt;&lt; Process finished. (Exit code 0)</div>
<div class="con" id="con11" style="top:874px;transform:scaleX(0.977);color:#008000">gcc -o oculus_glfw_sample.exe oculus_glfw_sample.c C:\raylib\raylib_icon rlgl.o glad.o -L. -lLibOVRRT32_1 -lglfw3 -lopengl32 -lgdi32 -std=c99</div>
<div class="con" id="con12" style="top:887px;transform:scaleX(1.022);color:#008000">Process started &gt;&gt;&gt;</div>
<div class="con" id="con13" style="top:900px;transform:scaleX(0.982);color:#000">oculus_glfw_sample.c: In function &#x27;main&#x27;:</div>
<div class="con" id="con14" style="top:913px;transform:scaleX(0.988);color:#ff9900">oculus_glfw_sample.c:374:9: warning: passing argument 4 of &#x27;ovr_SubmitFrame&#x27; from incompatible pointer type [enabled by default]</div>
<div class="con" id="con15" style="top:926px;transform:scaleX(0.958);color:#000">In file included from OculusSDK/LibOVR/Include/OVR_CAPI_GL.h:10:0,</div>
<div class="con" id="con16" style="top:939px;transform:scaleX(0.980);color:#000">                 from oculus_glfw_sample.c:29:</div>
<div class="con" id="con17" style="top:952px;transform:scaleX(0.998);color:#000">OculusSDK/LibOVR/Include/OVR_CAPI.h:1778:32: note: expected &#x27;const struct ovrLayerHeader * const*&#x27; but argument is of type &#x27;struct ovrLayerHeader **&#x27;</div>
<div class="con" id="con18" style="top:965px;transform:scaleX(1.000);color:#008000">&lt;&lt;&lt; Process finished. (Exit code 0)</div>

<!-- console scrollbar -->
<div class="a" style="left:1901px;top:730px;width:17px;height:262px;background:#f0f0f0"></div>
<div class="a" style="left:1902px;top:794px;width:15px;height:138px;background:#cdcdcd"></div>
<svg class="a" style="left:1903px;top:734px" width="12" height="8"><polyline points="2,6 6,2 10,6" fill="none" stroke="#606060" stroke-width="1.5"/></svg>
<svg class="a" style="left:1903px;top:979px" width="12" height="8"><polyline points="2,2 6,6 10,2" fill="none" stroke="#606060" stroke-width="1.5"/></svg>
<div class="a" style="left:1905px;top:711px;width:12px;height:11px;background:#e4e4e0;border:1px solid;border-color:#fff #808080 #808080 #fff;font:bold 9px 'Liberation Sans',sans-serif;line-height:9px;text-align:center;color:#404040">&#215;</div>
<div class="a" style="left:0;top:991px;width:1920px;height:2px;background:#f8f8f8"></div><div class="a" style="left:0;top:993px;width:1920px;height:2px;background:#8a8a8a"></div>
<div class="a" style="left:1918px;top:728px;width:2px;height:266px;background:#d8d8d8"></div>
<!-- bottom tabs -->
<div class="a" style="left:2px;top:994px;width:73px;height:21px;background:#f0f0f0;border-right:1px solid #a0a0a0;border-bottom:1px solid #a0a0a0"></div>
<svg class="a" style="left:3px;top:997px" width="14" height="14"><rect x="0.5" y="0.5" width="13" height="13" fill="#f4f8fc" stroke="#1a1a1a"/><rect x="1" y="1" width="12" height="3" fill="#4a7ab8"/><rect x="1" y="12" width="12" height="1.5" fill="#1a1a1a"/><path d="M3 7L5 8.5L3 10" fill="none" stroke="#333"/></svg>
<div class="a" style="left:21px;top:997px;font-size:12px;line-height:15px;color:#000">Console</div>
<div class="a" style="left:75px;top:994px;width:23px;height:19px;background:#fff;border:1px solid #707070;border-top:none;border-left:1.5px solid #707070"></div>
<svg class="a" style="left:79px;top:998px" width="14" height="13"><rect x="1" y="0" width="13" height="13" fill="#c8e8fc"/><rect x="0" y="0" width="1.5" height="13" fill="#000"/><rect x="12.5" y="2" width="1.5" height="11" fill="#3a70e0"/><rect x="11" y="0" width="3" height="2" fill="#000"/><rect x="2" y="9" width="10" height="2" fill="#60c0f8"/><path d="M1 2H4V9H1Z M4 3H7V9H4Z" fill="#303030"/></svg>
<!-- status bar -->
<div class="a" style="left:0;top:1017px;width:1920px;height:23px;background:#f0f0f0;border-top:1px solid #d8d8d8"></div>
<div class="a" style="left:2px;top:1023px;font-size:12px;line-height:15px;color:#000">C source file</div>
<div class="a" style="left:1179px;top:1019px;width:1px;height:21px;background:#d8d8d8"></div>
<div class="a" style="left:1380px;top:1019px;width:1px;height:21px;background:#d8d8d8"></div>
<div class="a" style="left:1640px;top:1019px;width:1px;height:21px;background:#d8d8d8"></div>
<div class="a" style="left:1749px;top:1019px;width:1px;height:21px;background:#d8d8d8"></div>
<div class="a" style="left:1870px;top:1019px;width:1px;height:21px;background:#d8d8d8"></div>
<div class="a" style="left:1900px;top:1019px;width:1px;height:21px;background:#d8d8d8"></div>
<div class="a" style="left:1184px;top:1023px;transform:scaleX(0.945);transform-origin:0 0;font-size:12px;line-height:15px;color:#000;white-space:pre">length : 29337    lines : 754</div>
<div class="a" style="left:1384px;top:1023px;transform:scaleX(0.915);transform-origin:0 0;font-size:12px;line-height:15px;color:#000;white-space:pre">Ln : 342    Col : 13    Sel : 0 | 0</div>
<div class="a" style="left:1645px;top:1023px;font-size:12px;line-height:15px;color:#000">UNIX</div>
<div class="a" style="left:1754px;top:1023px;font-size:12px;line-height:15px;color:#000">UTF-8</div>
<div class="a" style="left:1874px;top:1023px;font-size:12px;line-height:15px;color:#000">INS</div>

<!-- taskbar -->
<div class="a" style="left:0;top:1040px;width:1920px;height:40px;background:#05070b"></div>
<div class="a" style="left:391px;top:1040px;width:48px;height:40px;background:#2b2c2e"></div>
<div class="a" style="left:150px;top:1078px;width:40px;height:2px;background:#76b9ed"></div>
<div class="a" style="left:199px;top:1078px;width:40px;height:2px;background:#76b9ed"></div>
<div class="a" style="left:248px;top:1078px;width:40px;height:2px;background:#76b9ed"></div>
<div class="a" style="left:297px;top:1078px;width:40px;height:2px;background:#76b9ed"></div>
<div class="a" style="left:346px;top:1078px;width:40px;height:2px;background:#76b9ed"></div>
<div class="a" style="left:391px;top:1078px;width:48px;height:2px;background:#76b9ed"></div>
<svg class="a" style="left:16px;top:1052px" width="17" height="17"><path d="M0 2.4L7 1.4V8H0Z M8 1.2L17 0V8H8Z M0 9H7V15.6L0 14.6Z M8 9H17V17L8 15.8Z" fill="#fff"/></svg>
<svg class="a" style="left:63px;top:1051px" width="18" height="18"><circle cx="11" cy="7" r="5.5" fill="none" stroke="#fff" stroke-width="1.3"/><line x1="7" y1="11" x2="1" y2="17" stroke="#fff" stroke-width="1.5"/></svg>
<svg class="a" style="left:109px;top:1052px" width="22" height="17"><rect x="5" y="1.5" width="12" height="14" fill="none" stroke="#fff" stroke-width="1.3"/><path d="M3 3.5H1.5V13.5H3 M19 3.5H20.5V13.5H19" fill="none" stroke="#fff" stroke-width="1.2"/></svg>
<svg class="a" style="left:158px;top:1050px" width="23" height="20"><path d="M1 3H8L10 5H22V19H1Z" fill="#e8b83a"/><rect x="1" y="6" width="21" height="13" fill="#f8d866"/><path d="M7 19V13H16V19H13V16H10V19Z" fill="#2a9ee8"/><rect x="6" y="12" width="11" height="2" fill="#2a9ee8"/></svg>
<svg class="a" style="left:207px;top:1050px" width="23" height="23"><circle cx="11.5" cy="11.5" r="11" fill="#db4437"/><path d="M11.5 11.5 L22.5 11.5 A11 11 0 0 1 6 21 Z" fill="#f4c20d"/><path d="M11.5 11.5 L6 21 A11 11 0 0 1 1.9 6 Z" fill="#0f9d58"/><circle cx="11.5" cy="11.5" r="5" fill="#fff"/><circle cx="11.5" cy="11.5" r="4" fill="#4285f4"/></svg>
<svg class="a" style="left:256px;top:1048px" width="24" height="24"><path d="M1 2H16L20 6V23H1Z" fill="#f4f4f0" stroke="#a0a0a0"/><rect x="2" y="11" width="17" height="11" fill="#6cc24a"/><rect x="2" y="7" width="17" height="4" fill="#c8e8b0"/><path d="M7 8V20M9 8V20" stroke="#222" stroke-width="1.2"/><line x1="22" y1="1" x2="12" y2="19" stroke="#f0a020" stroke-width="2.5"/></svg>
<svg class="a" style="left:304px;top:1050px" width="24" height="20"><rect x="0.5" y="0.5" width="23" height="19" fill="#0c0c0c" stroke="#707070"/><rect x="1" y="1" width="22" height="2" fill="#b8b8b8"/><text x="2" y="10" font-family="Liberation Mono" font-size="6" fill="#e0e0e0">C:\</text><line x1="12" y1="9" x2="20" y2="9" stroke="#e0e0e0"/></svg>
<div class="a" style="left:354px;top:1048px;width:24px;height:24px;background:#fff"><div style="position:absolute;left:3px;top:7px;width:18px;height:10px;border:3px solid #111;border-radius:5px"></div></div>
<div class="a" style="left:403px;top:1048px;width:23px;height:24px;background:#fff;border:2px solid #111"><div style="position:absolute;left:2px;top:12px;font:bold 6px 'Liberation Sans',sans-serif;line-height:6px;color:#111">raylib</div></div>
<svg class="a" style="left:1721px;top:1056px" width="14" height="8"><polyline points="1,7 7,1 13,7" fill="none" stroke="#fff" stroke-width="1.2"/></svg>
<svg class="a" style="left:1744px;top:1053px" width="16" height="14"><g stroke="#fff" stroke-width="2"><line x1="8" y1="1" x2="8" y2="13"/><line x1="2" y1="4" x2="14" y2="10"/><line x1="2" y1="10" x2="14" y2="4"/></g><circle cx="8" cy="7" r="3" fill="#05070b"/></svg>
<svg class="a" style="left:1767px;top:1053px" width="18" height="15"><rect x="4.5" y="2.5" width="12" height="8" fill="none" stroke="#fff"/><line x1="10.5" y1="10.5" x2="10.5" y2="13" stroke="#fff"/><line x1="7" y1="13.5" x2="14" y2="13.5" stroke="#fff"/><rect x="0.5" y="1.5" width="4" height="3" fill="none" stroke="#fff"/><line x1="2.5" y1="4.5" x2="2.5" y2="14" stroke="#fff"/></svg>
<svg class="a" style="left:1791px;top:1053px" width="18" height="14"><path d="M1 5H4L8 1.5V12.5L4 9H1Z" fill="none" stroke="#fff"/><path d="M10.5 5A3 3 0 0 1 10.5 9 M12.5 3A6 6 0 0 1 12.5 11 M14.5 1.5A8.5 8.5 0 0 1 14.5 12.5" fill="none" stroke="#ccc"/></svg>
<svg class="a" style="left:1815px;top:1052px" width="18" height="17"><path d="M0.5 0.5H17.5V12.5H11L8.5 15.5L6 12.5H0.5Z" fill="none" stroke="#fff"/><g stroke="#fff"><line x1="3" y1="3.5" x2="15" y2="3.5"/><line x1="3" y1="6.5" x2="15" y2="6.5"/><line x1="3" y1="9.5" x2="10" y2="9.5"/></g></svg>
<div class="a" style="left:1862px;top:1044px;font-size:12px;line-height:14px;color:#fff">19:15</div>
<div class="a" style="left:1847px;top:1061px;font-size:12px;line-height:14px;color:#fff">11/05/2016</div>
<div class="a" style="left:1915px;top:1040px;width:1px;height:40px;background:#505050"></div>

<!-- cmd window -->
<div class="a" style="left:454px;top:127px;width:979px;height:514px;background:#fff;border:1px solid #aaa;border-bottom:none;box-shadow:0 0 12px rgba(0,0,0,0.35)"></div>
<div class="a" style="left:455px;top:160px;width:960px;height:480px;background:#000"></div>
<div class="a" style="left:1415px;top:160px;width:17px;height:480px;background:#f0f0f0"></div>
<div class="a" style="left:1416px;top:223px;width:15px;height:17px;background:#cdcdcd"></div>
<svg class="a" style="left:1418px;top:163px" width="12" height="10"><polyline points="2,7 6,3 10,7" fill="none" stroke="#606060" stroke-width="1.6"/></svg>
<svg class="a" style="left:465px;top:137px" width="16" height="13" shape-rendering="crispEdges"><rect x="0" y="0" width="16" height="13" fill="#8a9098"/><rect x="1" y="1" width="14" height="2" fill="#dde0e6"/><rect x="10" y="1" width="1" height="1" fill="#4a6aa0"/><rect x="12" y="1" width="1" height="1" fill="#4a6aa0"/><rect x="14" y="1" width="1" height="1" fill="#4a6aa0"/><rect x="1" y="3" width="14" height="9" fill="#000"/><g fill="#fff" transform="translate(0,1)"><rect x="2" y="5" width="1" height="3"/><rect x="3" y="4" width="2" height="1"/><rect x="3" y="8" width="2" height="1"/><rect x="5" y="5" width="1" height="1"/><rect x="5" y="7" width="1" height="1"/><rect x="7" y="5" width="1" height="1"/><rect x="7" y="7" width="1" height="1"/><rect x="9" y="4" width="1" height="2"/><rect x="10" y="6" width="1" height="3"/><rect x="12" y="8" width="2" height="1"/></g></svg>
<div class="a" style="left:486px;top:136px;font-size:12px;line-height:16px;color:#8c8c8c">C:\Windows\System32\cmd.exe - oculus_glfw_sample.exe</div>
<div class="a" style="left:1313px;top:143px;width:10px;height:1px;background:#707070"></div>
<div class="a" style="left:1358px;top:138px;width:10px;height:10px;border:1px solid #707070"></div>
<svg class="a" style="left:1403px;top:137px" width="12" height="12"><path d="M1 1L11 11M11 1L1 11" stroke="#707070" stroke-width="1.1"/></svg>
<div class="a mono" style="left:455px;top:178px;font-size:13.33px;line-height:16px;color:#c0c0c0;white-space:pre">C:\raylib\raylib\examples\oculus_glfw_sample&gt;oculus_glfw_sample.exe
INFO: OVR: Product Name: Oculus Rift CV1
INFO: OVR: Manufacturer: Oculus VR
INFO: OVR: Product ID: 49
INFO: OVR: Product Type: 14
INFO: OVR: Serian Number:
INFO: OVR: Resolution: 2160x1200
INFO: GLFW3: GLFW initialized successfully
INFO: GLFW3: Window created successfully
INFO: GLAD: OpenGL extensions loaded successfully
INFO: GPU: Vendor:   NVIDIA Corporation
INFO: GPU: Renderer: GeForce GTX 690/PCIe/SSE2
INFO: GPU: Version:  3.3.0 NVIDIA 364.72
INFO: GPU: GLSL:     3.30 NVIDIA via Cg compiler
INFO: Number of supported extensions: 322
INFO: [EXTENSION] DXT compressed textures supported
INFO: [EXTENSION] ETC2/EAC compressed textures supported
INFO: [TEX ID 5] Texture created successfully
INFO: [TEX ID 5] Base white texture loaded successfully
INFO: [VSHDR ID 1] Vertex shader compiled successfully
INFO: [FSHDR ID 2] Fragment shader compiled successfully
INFO: [SHDR ID 3] Shader program loaded successfully
INFO: [SHDR ID 3] Default shader loaded successfully
INFO: [CPU] Default buffers initialized successfully
INFO: [VAO ID 1] Default buffers VAO initialized successfully
INFO: [VAO ID 2] Default buffers VAO initialized successfully
INFO: [VAO ID 3] Default buffers VAO initialized successfully
INFO: OpenGL graphic device initialized successfully</div>

<!-- raylib window -->
<div class="a" style="left:786px;top:345px;width:1082px;height:632px;background:#fff;border:1px solid #1883d7;box-shadow:0 0 14px rgba(0,0,0,0.4)"></div>
<svg class="a" style="left:795px;top:352px" width="16" height="16" shape-rendering="crispEdges"><rect x="0" y="0" width="16" height="16" fill="#000"/><rect x="2" y="2" width="12" height="12" fill="#fff"/><rect x="3" y="3" width="10" height="10" fill="#f2f4f4"/><g fill="#000"><rect x="8" y="10" width="1" height="3"/><rect x="9" y="10" width="1" height="1"/><rect x="11" y="9" width="1" height="4"/><rect x="12" y="12" width="1" height="1"/></g></svg>
<div class="a" style="left:816px;top:353px;font-size:12px;line-height:16px;color:#000">raylib oculus sample</div>
<div class="a" style="left:1748px;top:360px;width:10px;height:1px;background:#000"></div>
<div class="a" style="left:1793px;top:355px;width:10px;height:10px;border:1px solid #000"></div>
<svg class="a" style="left:1838px;top:354px" width="12" height="12"><path d="M1 1L11 11M11 1L1 11" stroke="#000" stroke-width="1.1"/></svg>
<svg class="a" style="left:0;top:0" width="1920" height="1080" viewBox="0 0 1920 1080">
<defs>
<path id="lensL" d="M830.6 424.5 L838.3 420.9 L846.0 417.4 L853.7 414.1 L861.3 411.0 L869.0 408.0 L876.7 405.2 L884.4 402.6 L892.1 400.1 L899.8 397.7 L907.4 395.5 L915.1 393.4 L922.8 391.4 L930.5 389.6 L938.2 387.9 L945.9 386.3 L953.6 384.8 L961.2 383.5 L968.9 382.2 L976.6 381.1 L984.3 380.0 L992.0 379.1 L999.7 378.3 L1007.3 377.5 L1015.0 376.8 L1022.7 376.3 L1030.4 375.8 L1038.1 375.4 L1045.8 375.1 L1053.5 374.9 L1061.1 374.7 L1068.8 374.7 L1076.5 374.7 L1084.2 374.8 L1091.9 375.0 L1099.6 375.2 L1107.2 375.6 L1114.9 376.0 L1122.6 376.5 L1130.3 377.0 L1138.0 377.7 L1145.7 378.4 L1153.4 379.2 L1161.0 380.0 L1168.7 381.0 L1176.4 382.0 L1184.1 383.1 L1191.8 384.3 L1199.5 385.6 L1207.1 386.9 L1214.8 388.4 L1222.5 389.9 L1230.2 391.5 L1237.9 393.2 L1245.6 395.0 L1253.3 396.9 L1260.9 398.9 L1268.6 401.0 L1276.3 403.2 L1284.0 405.5 L1284.0 405.5 L1286.8 412.4 L1289.5 419.2 L1292.1 426.1 L1294.5 432.9 L1296.9 439.8 L1299.1 446.6 L1301.2 453.5 L1303.2 460.3 L1305.2 467.2 L1307.0 474.0 L1308.7 480.9 L1310.3 487.7 L1311.9 494.6 L1313.3 501.4 L1314.7 508.3 L1316.0 515.1 L1317.2 522.0 L1318.3 528.8 L1319.3 535.7 L1320.3 542.5 L1321.2 549.4 L1322.1 556.2 L1322.8 563.1 L1323.5 569.9 L1324.2 576.8 L1324.7 583.6 L1325.2 590.5 L1325.7 597.3 L1326.1 604.2 L1326.4 611.1 L1326.7 617.9 L1326.9 624.8 L1327.1 631.6 L1327.2 638.5 L1327.2 645.3 L1327.2 652.2 L1327.1 659.0 L1327.0 665.9 L1326.9 672.7 L1326.7 679.6 L1326.4 686.4 L1326.1 693.3 L1325.7 700.1 L1325.2 707.0 L1324.8 713.8 L1324.2 720.7 L1323.6 727.5 L1323.0 734.4 L1322.3 741.2 L1321.5 748.1 L1320.7 754.9 L1319.8 761.8 L1318.8 768.6 L1317.8 775.5 L1316.8 782.3 L1315.6 789.2 L1314.4 796.0 L1313.2 802.9 L1311.8 809.7 L1310.4 816.6 L1308.9 823.4 L1307.4 830.3 L1305.8 837.1 L1304.0 844.0 L1302.2 850.9 L1300.4 857.7 L1298.4 864.6 L1296.3 871.4 L1294.2 878.3 L1291.9 885.1 L1289.6 892.0 L1287.2 898.8 L1284.6 905.7 L1282.0 912.5 L1279.2 919.4 L1276.3 926.2 L1273.3 933.1 L1270.2 939.9 L1266.9 946.8 L1266.9 946.8 L1259.9 948.8 L1252.8 950.8 L1245.8 952.7 L1238.7 954.5 L1231.7 956.3 L1224.6 958.0 L1217.5 959.6 L1210.5 961.2 L1203.4 962.7 L1196.4 964.2 L1189.3 965.5 L1182.2 966.8 L1175.2 968.1 L1168.1 969.2 L1161.1 970.3 L1154.0 971.3 L1147.0 972.2 L1139.9 973.1 L1132.8 973.8 L1125.8 974.5 L1118.7 975.1 L1111.7 975.7 L1104.6 976.1 L1097.5 976.5 L1090.5 976.7 L1083.4 976.9 L1076.4 977.0 L1069.3 977.0 L1062.3 977.0 L1055.2 976.8 L1048.1 976.5 L1041.1 976.2 L1034.0 975.7 L1027.0 975.2 L1019.9 974.5 L1012.8 973.8 L1005.8 973.0 L998.7 972.0 L991.7 971.0 L984.6 969.9 L977.6 968.6 L970.5 967.3 L963.4 965.8 L956.4 964.3 L949.3 962.6 L942.3 960.8 L935.2 959.0 L928.1 957.0 L921.1 954.9 L914.0 952.7 L907.0 950.3 L899.9 947.9 L892.8 945.3 L885.8 942.7 L878.7 939.9 L871.7 937.0 L864.6 933.9 L857.6 930.8 L850.5 927.5 L850.5 927.5 L847.0 921.1 L843.7 914.8 L840.4 908.4 L837.4 902.0 L834.4 895.7 L831.5 889.3 L828.8 882.9 L826.2 876.6 L823.7 870.2 L821.3 863.8 L819.0 857.5 L816.8 851.1 L814.7 844.7 L812.7 838.4 L810.8 832.0 L809.0 825.6 L807.3 819.3 L805.6 812.9 L804.0 806.5 L802.6 800.2 L801.2 793.8 L799.8 787.4 L798.6 781.1 L797.4 774.7 L796.2 768.3 L795.2 762.0 L794.2 755.6 L793.3 749.2 L792.4 742.9 L791.6 736.5 L790.9 730.1 L790.2 723.8 L789.6 717.4 L789.1 711.0 L788.6 704.7 L788.1 698.3 L787.7 691.9 L787.4 685.6 L787.1 679.2 L786.9 672.8 L786.8 666.5 L786.7 660.1 L786.6 653.7 L786.6 647.4 L786.7 641.0 L786.8 634.6 L787.0 628.3 L787.2 621.9 L787.5 615.5 L787.8 609.2 L788.2 602.8 L788.7 596.4 L789.2 590.1 L789.8 583.7 L790.5 577.3 L791.2 571.0 L792.0 564.6 L792.8 558.2 L793.8 551.9 L794.8 545.5 L795.8 539.1 L797.0 532.8 L798.2 526.4 L799.5 520.0 L800.9 513.7 L802.4 507.3 L804.0 500.9 L805.6 494.6 L807.4 488.2 L809.2 481.8 L811.1 475.5 L813.2 469.1 L815.3 462.7 L817.6 456.4 L819.9 450.0 L822.4 443.6 L825.0 437.3 L827.8 430.9 L830.6 424.5 Z"/>
<clipPath id="vpL"><rect x="787" y="376" width="540" height="600"/></clipPath>
<clipPath id="vpR"><rect x="1327" y="376" width="540" height="600"/></clipPath>
<clipPath id="inL"><use href="#lensL"/></clipPath>
<clipPath id="inR"><use href="#lensL" transform="translate(2654,0) scale(-1,1)"/></clipPath>
<filter id="blur4" x="-10%" y="-10%" width="120%" height="120%"><feGaussianBlur stdDeviation="4"/></filter>
</defs>
<rect x="787" y="376" width="1080" height="600" fill="#000"/>
<g clip-path="url(#vpL)">
 <g clip-path="url(#inL)">
  <rect x="780" y="370" width="560" height="620" fill="#f4f4f4"/>
  <g fill="none" stroke="#d0d2ec" stroke-width="0.9" opacity="0.75"><polyline points="1069.5,557.7 1067.7,558.3 1065.9,559.0 1064.1,559.6 1062.3,560.2 1060.4,560.8 1058.5,561.5 1056.7,562.1 1054.7,562.8 1052.8,563.5 1050.9,564.1 1048.9,564.8 1047.0,565.5 1045.0,566.2 1043.0,566.9 1040.9,567.6 1038.9,568.4 1036.8,569.1 1034.7,569.8 1032.6,570.6 1030.5,571.3 1028.4,572.1 1026.2,572.9 1024.0,573.7 1021.8,574.5 1019.6,575.3 1017.4,576.1 1015.2,576.9 1012.9,577.8 1010.6,578.6 1008.3,579.5 1005.9,580.3 1003.6,581.2 1001.2,582.1 998.8,583.0 996.4,583.9 994.0,584.8 991.6,585.7 989.1,586.7 986.6,587.6 984.1,588.6 981.6,589.5 979.0,590.5 976.5,591.5 973.9,592.5 971.3,593.5 968.6,594.5 966.0,595.6 963.3,596.6 960.6,597.7 957.9,598.8 955.2,599.8 952.5,600.9 949.7,602.0 946.9,603.2 944.1,604.3 941.3,605.4 938.5,606.6 935.6,607.7 932.8,608.9 929.9,610.1 927.0,611.3 924.0,612.5 921.1,613.7 918.1,615.0 915.2,616.2 912.2,617.5 909.2,618.7 906.1,620.0 903.1,621.3 900.0,622.6 897.0,623.9 893.9,625.3 890.8,626.6 887.6,628.0 884.5,629.3 881.4,630.7 878.2,632.1 875.0,633.5 871.8,634.9 868.6,636.3 865.4,637.7 862.2,639.2 858.9,640.6 855.7,642.1 852.4,643.6 849.1,645.0 845.9,646.5 842.6,648.0 839.2,649.6 835.9,651.1 832.6,652.6 829.3,654.2 825.9,655.7 822.5,657.3 819.2,658.8 815.8,660.4 812.4,662.0 809.0,663.6 805.6,665.2 802.2,666.9"/><polyline points="1069.5,557.7 1071.5,558.3 1073.5,558.8 1075.4,559.3 1077.5,559.9 1079.5,560.4 1081.5,561.0 1083.6,561.5 1085.7,562.1 1087.8,562.7 1089.9,563.3 1092.0,563.8 1094.2,564.4 1096.4,565.0 1098.5,565.7 1100.7,566.3 1103.0,566.9 1105.2,567.5 1107.5,568.2 1109.7,568.8 1112.0,569.5 1114.3,570.1 1116.6,570.8 1119.0,571.5 1121.3,572.1 1123.7,572.8 1126.1,573.5 1128.5,574.2 1131.0,575.0 1133.4,575.7 1135.9,576.4 1138.4,577.1 1140.9,577.9 1143.4,578.6 1145.9,579.4 1148.5,580.2 1151.0,581.0 1153.6,581.8 1156.2,582.6 1158.8,583.4 1161.5,584.2 1164.1,585.0 1166.8,585.8 1169.5,586.7 1172.2,587.5 1174.9,588.4 1177.7,589.2 1180.4,590.1 1183.2,591.0 1186.0,591.9 1188.8,592.8 1191.6,593.7 1194.4,594.6 1197.3,595.5 1200.1,596.5 1203.0,597.4 1205.9,598.4 1208.8,599.3 1211.7,600.3 1214.6,601.3 1217.6,602.3 1220.5,603.3 1223.5,604.3 1226.5,605.3 1229.5,606.3 1232.5,607.4 1235.5,608.4 1238.5,609.4 1241.6,610.5 1244.6,611.6 1247.7,612.6 1250.8,613.7 1253.8,614.8 1256.9,615.9 1260.0,617.0 1263.1,618.1 1266.3,619.2 1269.4,620.4 1272.5,621.5 1275.7,622.6 1278.8,623.8 1282.0,624.9 1285.1,626.1 1288.3,627.3 1291.5,628.5 1294.7,629.6 1297.9,630.8 1301.0,632.0 1304.2,633.2 1307.5,634.4 1310.7,635.7 1313.9,636.9 1317.1,638.1 1320.3,639.3 1323.5,640.6 1326.8,641.8 1330.0,643.1 1333.2,644.3 1336.4,645.6 1339.7,646.9 1342.9,648.1"/><polyline points="1089.9,563.3 1088.1,563.9 1086.4,564.6 1084.6,565.2 1082.8,565.9 1080.9,566.6 1079.1,567.2 1077.2,567.9 1075.3,568.6 1073.4,569.4 1071.5,570.1 1069.5,570.8 1067.6,571.5 1065.6,572.3 1063.6,573.0 1061.5,573.8 1059.5,574.6 1057.4,575.4 1055.3,576.2 1053.2,577.0 1051.1,577.8 1048.9,578.6 1046.8,579.4 1044.6,580.3 1042.4,581.1 1040.1,582.0 1037.9,582.9 1035.6,583.8 1033.3,584.7 1031.0,585.6 1028.6,586.5 1026.3,587.4 1023.9,588.4 1021.5,589.3 1019.0,590.3 1016.6,591.3 1014.1,592.3 1011.6,593.3 1009.0,594.3 1006.5,595.3 1003.9,596.4 1001.3,597.4 998.7,598.5 996.1,599.6 993.4,600.6 990.7,601.7 988.0,602.9 985.3,604.0 982.5,605.1 979.7,606.3 976.9,607.5 974.1,608.6 971.2,609.8 968.3,611.0 965.5,612.3 962.5,613.5 959.6,614.8 956.6,616.0 953.6,617.3 950.6,618.6 947.6,619.9 944.5,621.2 941.5,622.6 938.4,623.9 935.2,625.3 932.1,626.6 928.9,628.0 925.8,629.4 922.6,630.8 919.3,632.3 916.1,633.7 912.8,635.2 909.6,636.6 906.3,638.1 902.9,639.6 899.6,641.1 896.3,642.7 892.9,644.2 889.5,645.8 886.1,647.3 882.7,648.9 879.2,650.5 875.8,652.1 872.3,653.7 868.8,655.3 865.3,657.0 861.8,658.6 858.3,660.3 854.8,662.0 851.2,663.7 847.6,665.3 844.1,667.1 840.5,668.8 836.9,670.5 833.3,672.3 829.7,674.0 826.0,675.8 822.4,677.6 818.7,679.3 815.1,681.1 811.4,682.9"/><polyline points="1050.9,564.1 1052.9,564.7 1054.9,565.3 1056.9,565.8 1058.9,566.4 1060.9,567.0 1063.0,567.6 1065.1,568.2 1067.2,568.8 1069.3,569.4 1071.5,570.1 1073.6,570.7 1075.8,571.3 1078.0,572.0 1080.2,572.7 1082.5,573.3 1084.7,574.0 1087.0,574.7 1089.3,575.4 1091.6,576.1 1094.0,576.8 1096.3,577.5 1098.7,578.2 1101.1,578.9 1103.5,579.7 1106.0,580.4 1108.5,581.2 1110.9,581.9 1113.4,582.7 1116.0,583.5 1118.5,584.3 1121.1,585.1 1123.7,585.9 1126.3,586.7 1128.9,587.6 1131.6,588.4 1134.2,589.3 1136.9,590.1 1139.6,591.0 1142.4,591.9 1145.1,592.8 1147.9,593.7 1150.7,594.6 1153.5,595.5 1156.3,596.4 1159.2,597.3 1162.0,598.3 1164.9,599.3 1167.8,600.2 1170.8,601.2 1173.7,602.2 1176.7,603.2 1179.7,604.2 1182.7,605.2 1185.7,606.2 1188.7,607.3 1191.8,608.3 1194.9,609.4 1198.0,610.5 1201.1,611.5 1204.2,612.6 1207.3,613.7 1210.5,614.8 1213.7,616.0 1216.9,617.1 1220.1,618.2 1223.3,619.4 1226.5,620.5 1229.8,621.7 1233.0,622.9 1236.3,624.1 1239.6,625.3 1242.9,626.5 1246.2,627.7 1249.5,628.9 1252.8,630.1 1256.2,631.4 1259.5,632.6 1262.9,633.9 1266.3,635.1 1269.7,636.4 1273.0,637.7 1276.4,639.0 1279.9,640.3 1283.3,641.6 1286.7,642.9 1290.1,644.2 1293.6,645.5 1297.0,646.9 1300.4,648.2 1303.9,649.6 1307.4,650.9 1310.8,652.3 1314.3,653.6 1317.7,655.0 1321.2,656.4 1324.7,657.8 1328.2,659.2 1331.7,660.6 1335.1,662.0 1338.6,663.4"/><polyline points="1112.0,569.5 1110.3,570.1 1108.6,570.8 1106.8,571.6 1105.0,572.3 1103.2,573.0 1101.4,573.7 1099.6,574.5 1097.7,575.2 1095.9,576.0 1094.0,576.8 1092.1,577.5 1090.1,578.3 1088.2,579.1 1086.2,580.0 1084.2,580.8 1082.2,581.6 1080.1,582.5 1078.1,583.3 1076.0,584.2 1073.8,585.1 1071.7,586.0 1069.5,586.9 1067.4,587.8 1065.2,588.7 1062.9,589.6 1060.7,590.6 1058.4,591.5 1056.1,592.5 1053.7,593.5 1051.4,594.5 1049.0,595.5 1046.6,596.6 1044.2,597.6 1041.7,598.6 1039.2,599.7 1036.7,600.8 1034.2,601.9 1031.6,603.0 1029.0,604.1 1026.4,605.3 1023.7,606.4 1021.0,607.6 1018.3,608.8 1015.6,610.0 1012.9,611.2 1010.1,612.4 1007.3,613.6 1004.4,614.9 1001.6,616.2 998.7,617.5 995.7,618.8 992.8,620.1 989.8,621.4 986.8,622.8 983.8,624.1 980.7,625.5 977.6,626.9 974.5,628.3 971.3,629.8 968.2,631.2 965.0,632.7 961.8,634.2 958.5,635.7 955.2,637.2 951.9,638.7 948.6,640.3 945.2,641.8 941.9,643.4 938.4,645.0 935.0,646.6 931.6,648.2 928.1,649.9 924.6,651.6 921.0,653.2 917.5,654.9 913.9,656.6 910.3,658.4 906.7,660.1 903.1,661.9 899.4,663.6 895.8,665.4 892.1,667.2 888.3,669.0 884.6,670.9 880.9,672.7 877.1,674.6 873.3,676.4 869.5,678.3 865.7,680.2 861.8,682.1 858.0,684.1 854.1,686.0 850.2,687.9 846.3,689.9 842.4,691.9 838.5,693.9 834.6,695.9 830.6,697.9 826.7,699.9 822.7,701.9"/><polyline points="1030.5,571.3 1032.5,572.0 1034.5,572.6 1036.5,573.2 1038.5,573.8 1040.5,574.5 1042.6,575.1 1044.7,575.8 1046.8,576.4 1048.9,577.1 1051.1,577.8 1053.3,578.5 1055.5,579.2 1057.7,579.9 1059.9,580.6 1062.2,581.3 1064.5,582.0 1066.8,582.8 1069.1,583.5 1071.5,584.3 1073.8,585.1 1076.2,585.8 1078.7,586.6 1081.1,587.4 1083.6,588.2 1086.1,589.1 1088.6,589.9 1091.1,590.7 1093.7,591.6 1096.3,592.4 1098.9,593.3 1101.6,594.2 1104.2,595.1 1106.9,596.0 1109.6,596.9 1112.4,597.8 1115.1,598.8 1117.9,599.7 1120.7,600.7 1123.6,601.6 1126.4,602.6 1129.3,603.6 1132.2,604.6 1135.1,605.6 1138.1,606.6 1141.1,607.7 1144.1,608.7 1147.1,609.8 1150.2,610.9 1153.2,611.9 1156.3,613.0 1159.5,614.1 1162.6,615.3 1165.8,616.4 1169.0,617.5 1172.2,618.7 1175.4,619.9 1178.7,621.0 1181.9,622.2 1185.2,623.4 1188.6,624.6 1191.9,625.9 1195.3,627.1 1198.6,628.3 1202.0,629.6 1205.5,630.9 1208.9,632.1 1212.4,633.4 1215.8,634.7 1219.3,636.1 1222.8,637.4 1226.3,638.7 1229.9,640.1 1233.4,641.4 1237.0,642.8 1240.6,644.2 1244.2,645.5 1247.8,646.9 1251.4,648.3 1255.0,649.8 1258.7,651.2 1262.3,652.6 1266.0,654.1 1269.7,655.5 1273.4,657.0 1277.1,658.4 1280.8,659.9 1284.5,661.4 1288.2,662.9 1291.9,664.4 1295.7,665.9 1299.4,667.4 1303.2,668.9 1306.9,670.5 1310.7,672.0 1314.4,673.5 1318.2,675.1 1322.0,676.6 1325.7,678.2 1329.5,679.7 1333.3,681.3"/><polyline points="1135.9,576.4 1134.2,577.2 1132.6,577.9 1130.9,578.7 1129.2,579.4 1127.5,580.2 1125.7,581.0 1123.9,581.8 1122.2,582.6 1120.3,583.5 1118.5,584.3 1116.7,585.1 1114.8,586.0 1112.9,586.9 1111.0,587.8 1109.0,588.7 1107.0,589.6 1105.1,590.5 1103.0,591.4 1101.0,592.4 1098.9,593.3 1096.8,594.3 1094.7,595.3 1092.6,596.3 1090.4,597.3 1088.2,598.3 1086.0,599.3 1083.7,600.4 1081.4,601.4 1079.1,602.5 1076.8,603.6 1074.4,604.7 1072.0,605.9 1069.6,607.0 1067.1,608.2 1064.7,609.3 1062.1,610.5 1059.6,611.7 1057.0,612.9 1054.4,614.2 1051.8,615.4 1049.1,616.7 1046.4,618.0 1043.7,619.3 1040.9,620.6 1038.1,622.0 1035.3,623.3 1032.4,624.7 1029.5,626.1 1026.6,627.5 1023.7,629.0 1020.7,630.4 1017.6,631.9 1014.6,633.4 1011.5,634.9 1008.4,636.4 1005.2,637.9 1002.0,639.5 998.8,641.1 995.5,642.7 992.2,644.3 988.9,646.0 985.5,647.6 982.1,649.3 978.7,651.0 975.2,652.8 971.8,654.5 968.2,656.3 964.7,658.0 961.1,659.8 957.5,661.7 953.8,663.5 950.1,665.4 946.4,667.3 942.7,669.2 938.9,671.1 935.1,673.0 931.3,675.0 927.4,677.0 923.6,678.9 919.6,681.0 915.7,683.0 911.8,685.0 907.8,687.1 903.8,689.2 899.7,691.3 895.7,693.4 891.6,695.5 887.5,697.7 883.4,699.9 879.2,702.0 875.1,704.2 870.9,706.4 866.7,708.7 862.5,710.9 858.3,713.1 854.0,715.4 849.8,717.7 845.5,720.0 841.2,722.3 836.9,724.6"/><polyline points="1008.3,579.5 1010.2,580.1 1012.2,580.8 1014.1,581.5 1016.1,582.2 1018.2,582.9 1020.2,583.6 1022.3,584.3 1024.4,585.0 1026.5,585.8 1028.6,586.5 1030.8,587.3 1033.0,588.0 1035.2,588.8 1037.4,589.6 1039.7,590.4 1042.0,591.2 1044.3,592.0 1046.6,592.8 1049.0,593.7 1051.4,594.5 1053.8,595.4 1056.2,596.2 1058.7,597.1 1061.2,598.0 1063.7,598.9 1066.3,599.8 1068.9,600.8 1071.5,601.7 1074.1,602.7 1076.8,603.6 1079.5,604.6 1082.2,605.6 1084.9,606.6 1087.7,607.6 1090.5,608.6 1093.4,609.7 1096.2,610.7 1099.1,611.8 1102.1,612.9 1105.0,614.0 1108.0,615.1 1111.0,616.2 1114.0,617.3 1117.1,618.5 1120.2,619.6 1123.3,620.8 1126.5,622.0 1129.7,623.2 1132.9,624.4 1136.2,625.6 1139.4,626.9 1142.7,628.1 1146.1,629.4 1149.4,630.7 1152.8,632.0 1156.2,633.3 1159.7,634.6 1163.1,635.9 1166.6,637.3 1170.2,638.6 1173.7,640.0 1177.3,641.4 1180.9,642.8 1184.5,644.2 1188.2,645.7 1191.8,647.1 1195.5,648.6 1199.2,650.1 1203.0,651.5 1206.7,653.0 1210.5,654.5 1214.3,656.1 1218.1,657.6 1222.0,659.1 1225.9,660.7 1229.7,662.3 1233.6,663.8 1237.5,665.4 1241.5,667.0 1245.4,668.6 1249.4,670.3 1253.3,671.9 1257.3,673.5 1261.3,675.2 1265.3,676.9 1269.4,678.5 1273.4,680.2 1277.4,681.9 1281.5,683.6 1285.5,685.3 1289.6,687.0 1293.7,688.7 1297.7,690.4 1301.8,692.2 1305.9,693.9 1310.0,695.6 1314.1,697.4 1318.2,699.1 1322.3,700.9 1326.4,702.7"/><polyline points="1161.5,584.2 1159.9,585.0 1158.4,585.8 1156.8,586.6 1155.2,587.5 1153.6,588.3 1151.9,589.2 1150.3,590.1 1148.6,590.9 1146.8,591.8 1145.1,592.8 1143.4,593.7 1141.6,594.6 1139.8,595.6 1137.9,596.5 1136.1,597.5 1134.2,598.5 1132.3,599.5 1130.4,600.5 1128.4,601.6 1126.4,602.6 1124.4,603.7 1122.4,604.7 1120.3,605.8 1118.2,607.0 1116.1,608.1 1113.9,609.2 1111.7,610.4 1109.5,611.6 1107.3,612.7 1105.0,614.0 1102.7,615.2 1100.4,616.4 1098.0,617.7 1095.6,619.0 1093.2,620.3 1090.7,621.6 1088.2,622.9 1085.6,624.3 1083.1,625.7 1080.5,627.1 1077.8,628.5 1075.1,629.9 1072.4,631.4 1069.7,632.8 1066.9,634.3 1064.0,635.9 1061.2,637.4 1058.3,639.0 1055.3,640.6 1052.4,642.2 1049.3,643.8 1046.3,645.5 1043.2,647.1 1040.0,648.8 1036.9,650.6 1033.6,652.3 1030.4,654.1 1027.1,655.9 1023.7,657.7 1020.3,659.5 1016.9,661.4 1013.5,663.3 1010.0,665.2 1006.4,667.1 1002.8,669.1 999.2,671.1 995.5,673.1 991.8,675.1 988.1,677.2 984.3,679.3 980.5,681.4 976.6,683.5 972.7,685.7 968.7,687.9 964.7,690.1 960.7,692.3 956.7,694.6 952.6,696.8 948.5,699.1 944.3,701.4 940.1,703.8 935.9,706.1 931.6,708.5 927.3,710.9 923.0,713.4 918.6,715.8 914.2,718.3 909.8,720.7 905.4,723.2 900.9,725.8 896.4,728.3 891.9,730.9 887.4,733.4 882.8,736.0 878.2,738.6 873.6,741.2 869.0,743.8 864.3,746.5 859.7,749.1 855.0,751.8"/><polyline points="984.1,588.6 986.0,589.3 987.9,590.0 989.8,590.8 991.7,591.6 993.7,592.3 995.7,593.1 997.7,593.9 999.8,594.7 1001.8,595.5 1003.9,596.4 1006.0,597.2 1008.2,598.0 1010.4,598.9 1012.6,599.8 1014.8,600.7 1017.1,601.6 1019.3,602.5 1021.7,603.4 1024.0,604.3 1026.4,605.3 1028.8,606.2 1031.2,607.2 1033.7,608.2 1036.2,609.2 1038.7,610.2 1041.2,611.2 1043.8,612.2 1046.4,613.3 1049.1,614.4 1051.8,615.4 1054.5,616.5 1057.2,617.6 1060.0,618.8 1062.8,619.9 1065.7,621.1 1068.6,622.2 1071.5,623.4 1074.5,624.6 1077.4,625.8 1080.5,627.1 1083.5,628.3 1086.6,629.6 1089.7,630.8 1092.9,632.1 1096.1,633.4 1099.3,634.8 1102.6,636.1 1105.9,637.5 1109.3,638.9 1112.6,640.2 1116.0,641.7 1119.5,643.1 1123.0,644.5 1126.5,646.0 1130.0,647.5 1133.6,649.0 1137.3,650.5 1140.9,652.0 1144.6,653.5 1148.3,655.1 1152.1,656.7 1155.9,658.3 1159.7,659.9 1163.6,661.5 1167.5,663.1 1171.4,664.8 1175.3,666.5 1179.3,668.1 1183.3,669.8 1187.3,671.6 1191.4,673.3 1195.5,675.0 1199.6,676.8 1203.8,678.6 1207.9,680.4 1212.1,682.2 1216.3,684.0 1220.6,685.8 1224.8,687.6 1229.1,689.5 1233.4,691.3 1237.7,693.2 1242.0,695.1 1246.4,697.0 1250.8,698.9 1255.1,700.8 1259.5,702.7 1263.9,704.6 1268.4,706.6 1272.8,708.5 1277.2,710.5 1281.7,712.4 1286.1,714.4 1290.6,716.4 1295.1,718.3 1299.5,720.3 1304.0,722.3 1308.5,724.3 1313.0,726.3 1317.5,728.3"/><polyline points="1217.6,602.3 1216.3,603.3 1215.1,604.2 1213.8,605.2 1212.5,606.2 1211.1,607.3 1209.8,608.3 1208.4,609.4 1207.0,610.4 1205.6,611.5 1204.2,612.6 1202.7,613.8 1201.3,614.9 1199.8,616.0 1198.2,617.2 1196.7,618.4 1195.1,619.6 1193.5,620.8 1191.9,622.1 1190.2,623.3 1188.6,624.6 1186.9,625.9 1185.1,627.3 1183.4,628.6 1181.6,630.0 1179.7,631.4 1177.9,632.8 1176.0,634.2 1174.1,635.7 1172.1,637.1 1170.2,638.6 1168.1,640.2 1166.1,641.7 1164.0,643.3 1161.9,644.9 1159.7,646.5 1157.5,648.2 1155.3,649.9 1153.0,651.6 1150.7,653.3 1148.3,655.1 1145.9,656.9 1143.5,658.7 1141.0,660.6 1138.5,662.5 1135.9,664.4 1133.3,666.3 1130.6,668.3 1127.9,670.3 1125.1,672.4 1122.3,674.5 1119.5,676.6 1116.6,678.7 1113.6,680.9 1110.6,683.1 1107.5,685.4 1104.4,687.7 1101.2,690.0 1098.0,692.4 1094.7,694.8 1091.3,697.2 1087.9,699.7 1084.5,702.2 1080.9,704.8 1077.4,707.3 1073.7,710.0 1070.0,712.6 1066.2,715.4 1062.4,718.1 1058.5,720.9 1054.6,723.7 1050.6,726.6 1046.5,729.5 1042.3,732.4 1038.1,735.4 1033.9,738.4 1029.6,741.5 1025.2,744.6 1020.7,747.7 1016.2,750.9 1011.6,754.1 1007.0,757.3 1002.3,760.6 997.6,763.9 992.8,767.2 987.9,770.6 983.0,774.0 978.0,777.4 973.0,780.8 967.9,784.3 962.8,787.8 957.6,791.4 952.4,794.9 947.1,798.5 941.8,802.1 936.5,805.7 931.1,809.3 925.6,813.0 920.1,816.7 914.6,820.3 909.1,824.0"/><polyline points="929.9,610.1 931.5,611.0 933.2,611.9 934.9,612.9 936.7,613.9 938.4,614.8 940.2,615.8 942.0,616.8 943.8,617.8 945.7,618.9 947.6,619.9 949.5,621.0 951.5,622.0 953.4,623.1 955.4,624.2 957.5,625.4 959.6,626.5 961.7,627.6 963.8,628.8 966.0,630.0 968.2,631.2 970.4,632.4 972.7,633.7 975.0,634.9 977.3,636.2 979.7,637.5 982.1,638.9 984.6,640.2 987.1,641.5 989.6,642.9 992.2,644.3 994.8,645.8 997.5,647.2 1000.2,648.7 1002.9,650.1 1005.7,651.7 1008.6,653.2 1011.4,654.7 1014.4,656.3 1017.3,657.9 1020.3,659.5 1023.4,661.2 1026.5,662.8 1029.7,664.5 1032.9,666.3 1036.2,668.0 1039.5,669.8 1042.8,671.6 1046.2,673.4 1049.7,675.2 1053.2,677.1 1056.8,679.0 1060.4,680.9 1064.1,682.9 1067.8,684.8 1071.6,686.8 1075.4,688.9 1079.3,690.9 1083.3,693.0 1087.3,695.1 1091.3,697.2 1095.4,699.4 1099.6,701.5 1103.8,703.7 1108.1,706.0 1112.4,708.2 1116.8,710.5 1121.2,712.8 1125.7,715.1 1130.2,717.4 1134.8,719.8 1139.5,722.2 1144.1,724.6 1148.9,727.0 1153.7,729.5 1158.5,731.9 1163.3,734.4 1168.3,736.9 1173.2,739.5 1178.2,742.0 1183.2,744.5 1188.3,747.1 1193.4,749.7 1198.5,752.3 1203.7,754.9 1208.9,757.5 1214.2,760.1 1219.4,762.8 1224.7,765.4 1230.0,768.0 1235.3,770.7 1240.7,773.4 1246.1,776.0 1251.5,778.7 1256.9,781.4 1262.3,784.0 1267.7,786.7 1273.2,789.4 1278.6,792.1 1284.1,794.8 1289.6,797.4"/><polyline points="1247.7,612.6 1246.6,613.7 1245.6,614.8 1244.5,615.9 1243.3,617.0 1242.2,618.1 1241.1,619.3 1239.9,620.4 1238.7,621.6 1237.5,622.8 1236.3,624.1 1235.0,625.3 1233.8,626.6 1232.5,627.8 1231.2,629.1 1229.8,630.5 1228.5,631.8 1227.1,633.2 1225.7,634.5 1224.3,635.9 1222.8,637.4 1221.3,638.8 1219.8,640.3 1218.3,641.8 1216.7,643.3 1215.1,644.9 1213.5,646.5 1211.9,648.1 1210.2,649.7 1208.5,651.3 1206.7,653.0 1205.0,654.7 1203.2,656.5 1201.3,658.3 1199.4,660.1 1197.5,661.9 1195.6,663.8 1193.6,665.7 1191.5,667.6 1189.5,669.6 1187.3,671.6 1185.2,673.6 1183.0,675.7 1180.7,677.8 1178.5,679.9 1176.1,682.1 1173.7,684.3 1171.3,686.6 1168.8,688.9 1166.3,691.2 1163.7,693.6 1161.1,696.0 1158.4,698.5 1155.7,701.0 1152.9,703.5 1150.0,706.1 1147.1,708.8 1144.1,711.5 1141.1,714.2 1138.0,717.0 1134.8,719.8 1131.6,722.7 1128.3,725.6 1125.0,728.6 1121.5,731.6 1118.0,734.7 1114.5,737.8 1110.8,741.0 1107.1,744.2 1103.3,747.5 1099.5,750.8 1095.6,754.2 1091.6,757.6 1087.5,761.1 1083.3,764.6 1079.1,768.2 1074.8,771.8 1070.4,775.4 1065.9,779.2 1061.4,782.9 1056.8,786.7 1052.1,790.6 1047.3,794.5 1042.5,798.4 1037.5,802.4 1032.5,806.5 1027.5,810.5 1022.3,814.6 1017.1,818.8 1011.8,822.9 1006.4,827.1 1001.0,831.4 995.5,835.6 990.0,839.9 984.3,844.2 978.7,848.6 972.9,853.0 967.1,857.3 961.3,861.7 955.4,866.2 949.4,870.6"/><polyline points="900.0,622.6 901.5,623.7 903.0,624.7 904.6,625.8 906.2,626.9 907.7,628.0 909.4,629.1 911.0,630.2 912.7,631.4 914.4,632.5 916.1,633.7 917.8,634.9 919.6,636.1 921.4,637.4 923.3,638.6 925.2,639.9 927.1,641.2 929.0,642.5 931.0,643.9 933.0,645.2 935.0,646.6 937.1,648.0 939.2,649.4 941.3,650.9 943.5,652.4 945.8,653.8 948.0,655.4 950.3,656.9 952.7,658.5 955.0,660.1 957.5,661.7 959.9,663.3 962.5,665.0 965.0,666.7 967.6,668.4 970.3,670.1 973.0,671.9 975.7,673.7 978.5,675.5 981.4,677.4 984.3,679.3 987.2,681.2 990.2,683.2 993.3,685.1 996.4,687.2 999.6,689.2 1002.8,691.3 1006.1,693.4 1009.5,695.5 1012.9,697.7 1016.4,699.9 1019.9,702.1 1023.5,704.4 1027.1,706.7 1030.9,709.0 1034.7,711.4 1038.5,713.8 1042.4,716.2 1046.4,718.7 1050.5,721.2 1054.6,723.7 1058.8,726.3 1063.0,728.9 1067.3,731.5 1071.7,734.2 1076.2,736.9 1080.7,739.6 1085.3,742.3 1090.0,745.1 1094.7,747.9 1099.5,750.8 1104.4,753.7 1109.3,756.6 1114.3,759.5 1119.3,762.4 1124.4,765.4 1129.6,768.4 1134.9,771.4 1140.1,774.4 1145.5,777.5 1150.9,780.6 1156.4,783.7 1161.9,786.8 1167.4,789.9 1173.1,793.0 1178.7,796.2 1184.4,799.3 1190.1,802.5 1195.9,805.6 1201.7,808.8 1207.6,812.0 1213.5,815.2 1219.4,818.4 1225.3,821.5 1231.3,824.7 1237.3,827.9 1243.3,831.1 1249.3,834.3 1255.4,837.4 1261.4,840.6 1267.5,843.8"/><polyline points="1278.8,623.8 1278.0,625.0 1277.1,626.2 1276.2,627.4 1275.3,628.6 1274.4,629.9 1273.5,631.1 1272.6,632.4 1271.6,633.7 1270.6,635.1 1269.7,636.4 1268.6,637.8 1267.6,639.2 1266.6,640.6 1265.5,642.0 1264.4,643.5 1263.3,645.0 1262.2,646.5 1261.1,648.0 1259.9,649.6 1258.7,651.2 1257.5,652.8 1256.2,654.4 1255.0,656.1 1253.7,657.8 1252.4,659.5 1251.0,661.3 1249.7,663.1 1248.3,664.9 1246.9,666.8 1245.4,668.6 1243.9,670.6 1242.4,672.5 1240.9,674.5 1239.3,676.5 1237.7,678.6 1236.0,680.7 1234.4,682.8 1232.6,685.0 1230.9,687.2 1229.1,689.5 1227.3,691.8 1225.4,694.1 1223.5,696.5 1221.5,698.9 1219.5,701.4 1217.5,703.9 1215.4,706.5 1213.2,709.1 1211.0,711.8 1208.8,714.5 1206.5,717.2 1204.1,720.0 1201.7,722.9 1199.3,725.8 1196.8,728.8 1194.2,731.8 1191.5,734.9 1188.8,738.1 1186.1,741.3 1183.2,744.5 1180.3,747.9 1177.4,751.2 1174.3,754.7 1171.2,758.2 1168.0,761.8 1164.8,765.4 1161.4,769.1 1158.0,772.9 1154.5,776.7 1150.9,780.6 1147.2,784.5 1143.5,788.5 1139.7,792.6 1135.7,796.8 1131.7,801.0 1127.6,805.3 1123.4,809.6 1119.1,814.0 1114.8,818.5 1110.3,823.0 1105.7,827.6 1101.1,832.2 1096.3,836.9 1091.4,841.7 1086.5,846.5 1081.5,851.3 1076.3,856.3 1071.1,861.2 1065.8,866.2 1060.4,871.3 1054.8,876.4 1049.3,881.5 1043.6,886.7 1037.8,891.9 1031.9,897.1 1026.0,902.4 1020.0,907.7 1013.9,913.0 1007.7,918.4 1001.4,923.7"/><polyline points="868.6,636.3 869.9,637.5 871.2,638.7 872.6,639.9 874.0,641.1 875.3,642.4 876.8,643.6 878.2,644.9 879.7,646.2 881.2,647.5 882.7,648.9 884.2,650.3 885.8,651.7 887.4,653.1 889.0,654.5 890.7,656.0 892.4,657.4 894.1,659.0 895.8,660.5 897.6,662.0 899.4,663.6 901.3,665.2 903.2,666.9 905.1,668.5 907.1,670.2 909.1,671.9 911.1,673.7 913.2,675.5 915.3,677.3 917.4,679.1 919.6,681.0 921.9,682.9 924.2,684.8 926.5,686.7 928.9,688.7 931.3,690.8 933.8,692.8 936.4,694.9 939.0,697.1 941.6,699.2 944.3,701.4 947.0,703.7 949.8,706.0 952.7,708.3 955.6,710.7 958.6,713.1 961.7,715.5 964.8,718.0 968.0,720.5 971.2,723.1 974.5,725.7 977.9,728.3 981.4,731.0 984.9,733.7 988.5,736.5 992.1,739.3 995.9,742.2 999.7,745.1 1003.6,748.0 1007.6,751.0 1011.6,754.1 1015.8,757.2 1020.0,760.3 1024.3,763.4 1028.7,766.6 1033.2,769.9 1037.7,773.2 1042.3,776.5 1047.1,779.9 1051.9,783.3 1056.8,786.7 1061.8,790.2 1066.8,793.7 1072.0,797.3 1077.2,800.9 1082.5,804.5 1087.9,808.1 1093.4,811.8 1098.9,815.5 1104.6,819.2 1110.3,823.0 1116.1,826.8 1121.9,830.5 1127.9,834.3 1133.9,838.2 1139.9,842.0 1146.1,845.8 1152.2,849.7 1158.5,853.5 1164.8,857.4 1171.2,861.3 1177.6,865.1 1184.0,869.0 1190.5,872.8 1197.1,876.7 1203.6,880.5 1210.3,884.4 1216.9,888.2 1223.6,892.0 1230.3,895.8 1237.1,899.6"/><polyline points="1310.7,635.7 1310.0,637.0 1309.4,638.3 1308.8,639.6 1308.1,641.0 1307.4,642.3 1306.8,643.7 1306.1,645.2 1305.4,646.6 1304.6,648.1 1303.9,649.6 1303.1,651.1 1302.4,652.6 1301.6,654.2 1300.8,655.8 1300.0,657.4 1299.2,659.0 1298.3,660.7 1297.5,662.4 1296.6,664.1 1295.7,665.9 1294.8,667.7 1293.8,669.5 1292.9,671.4 1291.9,673.2 1290.9,675.2 1289.9,677.1 1288.8,679.1 1287.7,681.1 1286.6,683.2 1285.5,685.3 1284.4,687.4 1283.2,689.6 1282.0,691.8 1280.8,694.1 1279.5,696.4 1278.2,698.7 1276.9,701.1 1275.6,703.5 1274.2,706.0 1272.8,708.5 1271.3,711.1 1269.8,713.7 1268.3,716.4 1266.8,719.1 1265.2,721.9 1263.5,724.7 1261.8,727.6 1260.1,730.5 1258.3,733.5 1256.5,736.6 1254.6,739.7 1252.7,742.9 1250.7,746.1 1248.7,749.5 1246.6,752.8 1244.5,756.3 1242.3,759.8 1240.0,763.3 1237.7,767.0 1235.3,770.7 1232.9,774.5 1230.4,778.3 1227.8,782.3 1225.1,786.3 1222.4,790.4 1219.6,794.5 1216.7,798.8 1213.8,803.1 1210.7,807.5 1207.6,812.0 1204.4,816.6 1201.1,821.2 1197.7,825.9 1194.2,830.7 1190.6,835.6 1186.9,840.6 1183.1,845.6 1179.2,850.8 1175.2,856.0 1171.2,861.3 1167.0,866.6 1162.6,872.1 1158.2,877.6 1153.7,883.2 1149.1,888.8 1144.3,894.6 1139.5,900.4 1134.5,906.3 1129.4,912.2 1124.2,918.2 1118.9,924.3 1113.4,930.4 1107.9,936.6 1102.2,942.8 1096.5,949.1 1090.6,955.4 1084.6,961.8 1078.5,968.2 1072.3,974.7 1066.0,981.2"/><polyline points="835.9,651.1 837.0,652.4 838.1,653.8 839.2,655.1 840.4,656.5 841.5,657.9 842.7,659.4 843.9,660.8 845.1,662.3 846.4,663.8 847.6,665.3 848.9,666.9 850.3,668.5 851.6,670.1 853.0,671.7 854.4,673.4 855.8,675.1 857.3,676.8 858.8,678.5 860.3,680.3 861.8,682.1 863.4,684.0 865.0,685.8 866.7,687.7 868.4,689.7 870.1,691.7 871.8,693.7 873.6,695.7 875.5,697.8 877.3,699.9 879.2,702.0 881.2,704.2 883.2,706.4 885.2,708.7 887.3,711.0 889.5,713.4 891.7,715.8 893.9,718.2 896.2,720.7 898.5,723.2 900.9,725.8 903.4,728.4 905.9,731.0 908.4,733.7 911.1,736.5 913.8,739.3 916.5,742.2 919.3,745.1 922.2,748.0 925.2,751.1 928.2,754.1 931.3,757.2 934.5,760.4 937.7,763.7 941.1,766.9 944.5,770.3 948.0,773.7 951.5,777.1 955.2,780.6 958.9,784.2 962.8,787.8 966.7,791.5 970.7,795.3 974.9,799.0 979.1,802.9 983.4,806.8 987.8,810.8 992.3,814.8 996.9,818.8 1001.6,823.0 1006.4,827.1 1011.4,831.4 1016.4,835.6 1021.5,839.9 1026.8,844.3 1032.1,848.7 1037.5,853.1 1043.1,857.6 1048.7,862.1 1054.5,866.7 1060.4,871.3 1066.3,875.9 1072.4,880.5 1078.5,885.2 1084.8,889.9 1091.1,894.6 1097.6,899.3 1104.1,904.0 1110.7,908.7 1117.4,913.5 1124.2,918.2 1131.0,923.0 1138.0,927.7 1145.0,932.4 1152.0,937.2 1159.2,941.9 1166.4,946.6 1173.6,951.4 1180.9,956.1 1188.3,960.8 1195.7,965.4"/><polyline points="1342.9,648.1 1342.5,649.6 1342.1,651.0 1341.7,652.5 1341.3,653.9 1340.9,655.5 1340.5,657.0 1340.0,658.5 1339.6,660.1 1339.1,661.7 1338.6,663.4 1338.2,665.0 1337.7,666.7 1337.2,668.4 1336.6,670.2 1336.1,672.0 1335.6,673.8 1335.0,675.6 1334.4,677.5 1333.9,679.4 1333.3,681.3 1332.7,683.3 1332.0,685.3 1331.4,687.3 1330.7,689.4 1330.1,691.5 1329.4,693.7 1328.7,695.8 1327.9,698.1 1327.2,700.3 1326.4,702.7 1325.6,705.0 1324.8,707.4 1324.0,709.9 1323.1,712.3 1322.3,714.9 1321.4,717.5 1320.4,720.1 1319.5,722.8 1318.5,725.5 1317.5,728.3 1316.5,731.2 1315.4,734.1 1314.3,737.0 1313.2,740.0 1312.0,743.1 1310.8,746.3 1309.6,749.5 1308.3,752.7 1307.0,756.1 1305.6,759.5 1304.3,762.9 1302.8,766.5 1301.3,770.1 1299.8,773.7 1298.2,777.5 1296.6,781.3 1294.9,785.2 1293.2,789.2 1291.4,793.3 1289.6,797.4 1287.7,801.7 1285.7,806.0 1283.7,810.4 1281.6,814.9 1279.4,819.5 1277.2,824.1 1274.9,828.9 1272.5,833.8 1270.0,838.7 1267.5,843.8 1264.9,848.9 1262.2,854.1 1259.4,859.5 1256.5,864.9 1253.5,870.5 1250.4,876.1 1247.2,881.8 1243.9,887.7 1240.5,893.6 1237.1,899.6 1233.5,905.8 1229.7,912.0 1225.9,918.4 1222.0,924.8 1217.9,931.3 1213.7,938.0 1209.4,944.7 1205.0,951.5 1200.4,958.4 1195.7,965.4 1190.9,972.5 1186.0,979.7 1180.9,987.0 1175.7,994.4 1170.3,1001.8 1164.9,1009.4 1159.3,1017.0 1153.5,1024.7 1147.7,1032.6 1141.6,1040.4"/><polyline points="802.2,666.9 803.0,668.3 803.9,669.9 804.8,671.4 805.7,673.0 806.6,674.6 807.5,676.2 808.4,677.8 809.4,679.5 810.4,681.2 811.4,682.9 812.4,684.7 813.5,686.5 814.5,688.3 815.6,690.2 816.8,692.0 817.9,693.9 819.1,695.9 820.3,697.9 821.5,699.9 822.7,701.9 824.0,704.0 825.3,706.2 826.6,708.3 828.0,710.5 829.4,712.8 830.8,715.0 832.3,717.4 833.8,719.7 835.3,722.1 836.9,724.6 838.5,727.1 840.2,729.6 841.9,732.2 843.6,734.9 845.4,737.6 847.2,740.3 849.1,743.1 851.0,746.0 853.0,748.9 855.0,751.8 857.0,754.8 859.2,757.9 861.4,761.0 863.6,764.2 865.9,767.5 868.3,770.8 870.7,774.1 873.2,777.6 875.8,781.1 878.4,784.6 881.1,788.3 883.9,792.0 886.7,795.7 889.7,799.6 892.7,803.5 895.8,807.4 899.0,811.5 902.3,815.6 905.6,819.8 909.1,824.0 912.7,828.4 916.3,832.8 920.1,837.3 923.9,841.8 927.9,846.4 932.0,851.1 936.2,855.9 940.5,860.7 944.9,865.6 949.4,870.6 954.1,875.6 958.8,880.8 963.7,885.9 968.7,891.2 973.9,896.4 979.1,901.8 984.5,907.2 990.0,912.7 995.7,918.2 1001.4,923.7 1007.3,929.3 1013.4,935.0 1019.5,940.6 1025.8,946.4 1032.2,952.1 1038.7,957.9 1045.3,963.7 1052.1,969.5 1059.0,975.4 1066.0,981.2 1073.1,987.1 1080.3,993.0 1087.6,998.9 1095.0,1004.8 1102.5,1010.7 1110.2,1016.7 1117.9,1022.6 1125.7,1028.5 1133.6,1034.5 1141.6,1040.4"/></g><g fill="none" stroke="#a0a0a0" stroke-width="0.9"><polyline points="1188.8,592.8 1187.4,593.7 1185.9,594.6 1184.5,595.5 1183.0,596.4 1181.5,597.3 1180.0,598.3 1178.5,599.2 1176.9,600.2 1175.3,601.2 1173.7,602.2 1172.1,603.2 1170.4,604.2 1168.8,605.3 1167.1,606.3 1165.4,607.4 1163.6,608.5 1161.8,609.6 1160.0,610.7 1158.2,611.9 1156.3,613.0 1154.5,614.2 1152.5,615.4 1150.6,616.6 1148.6,617.8 1146.6,619.1 1144.6,620.4 1142.5,621.6 1140.4,622.9 1138.3,624.3 1136.2,625.6 1134.0,627.0 1131.7,628.4 1129.5,629.8 1127.2,631.2 1124.8,632.7 1122.5,634.1 1120.1,635.6 1117.6,637.1 1115.2,638.7 1112.6,640.2 1110.1,641.8 1107.5,643.5 1104.8,645.1 1102.2,646.8 1099.4,648.4 1096.7,650.2 1093.9,651.9 1091.0,653.7 1088.1,655.5 1085.2,657.3 1082.2,659.1 1079.2,661.0 1076.1,662.9 1073.0,664.9 1069.8,666.8 1066.6,668.8 1063.3,670.9 1060.0,672.9 1056.6,675.0 1053.2,677.1 1049.8,679.2 1046.2,681.4 1042.7,683.6 1039.1,685.8 1035.4,688.1 1031.7,690.4 1027.9,692.7 1024.1,695.1 1020.3,697.5 1016.4,699.9 1012.4,702.3 1008.4,704.8 1004.3,707.3 1000.2,709.8 996.0,712.4 991.8,715.0 987.6,717.6 983.3,720.3 978.9,723.0 974.5,725.7 970.1,728.4 965.6,731.2 961.1,733.9 956.5,736.8 951.9,739.6 947.2,742.5 942.5,745.3 937.8,748.2 933.0,751.2 928.2,754.1 923.4,757.1 918.5,760.1 913.6,763.1 908.6,766.1 903.7,769.2 898.7,772.2 893.6,775.3 888.6,778.4 883.5,781.5 878.4,784.6"/><polyline points="957.9,598.8 959.7,599.6 961.5,600.4 963.4,601.2 965.2,602.1 967.1,603.0 969.0,603.8 970.9,604.7 972.9,605.6 974.9,606.5 976.9,607.5 978.9,608.4 981.0,609.3 983.1,610.3 985.2,611.3 987.4,612.3 989.6,613.3 991.8,614.3 994.1,615.3 996.3,616.4 998.7,617.5 1001.0,618.5 1003.4,619.6 1005.8,620.7 1008.2,621.9 1010.7,623.0 1013.2,624.2 1015.8,625.3 1018.4,626.5 1021.0,627.7 1023.7,629.0 1026.3,630.2 1029.1,631.4 1031.9,632.7 1034.7,634.0 1037.5,635.3 1040.4,636.7 1043.3,638.0 1046.3,639.4 1049.3,640.8 1052.4,642.2 1055.4,643.6 1058.6,645.0 1061.8,646.5 1065.0,648.0 1068.2,649.5 1071.5,651.0 1074.9,652.5 1078.3,654.1 1081.7,655.7 1085.2,657.3 1088.7,658.9 1092.3,660.6 1095.9,662.2 1099.5,663.9 1103.2,665.6 1106.9,667.3 1110.7,669.1 1114.6,670.9 1118.4,672.6 1122.3,674.5 1126.3,676.3 1130.3,678.1 1134.3,680.0 1138.4,681.9 1142.5,683.8 1146.7,685.7 1150.9,687.7 1155.1,689.6 1159.4,691.6 1163.7,693.6 1168.1,695.6 1172.5,697.6 1176.9,699.7 1181.4,701.8 1185.9,703.8 1190.4,705.9 1194.9,708.0 1199.5,710.2 1204.1,712.3 1208.8,714.5 1213.5,716.6 1218.2,718.8 1222.9,721.0 1227.6,723.2 1232.4,725.4 1237.2,727.6 1242.0,729.9 1246.8,732.1 1251.6,734.3 1256.5,736.6 1261.4,738.9 1266.2,741.1 1271.1,743.4 1276.0,745.7 1281.0,748.0 1285.9,750.3 1290.8,752.6 1295.8,754.9 1300.7,757.1 1305.6,759.5"/></g>
  <use href="#lensL" fill="none" stroke="#9494a0" stroke-width="12" filter="url(#blur4)"/>
  <use href="#lensL" fill="none" stroke="#909000" stroke-width="7"/>
  <use href="#lensL" fill="none" stroke="#6a0000" stroke-width="2"/>
 </g>
 <polygon points="1080.6,590.1 1152.4,614.8 1144.3,691 1090.2,735.8 1023.7,696 1017,618.5" fill="#e62937" stroke="#f020a0" stroke-width="0.8"/>
</g>
<g clip-path="url(#vpR)">
 <g clip-path="url(#inR)">
  <rect x="1320" y="370" width="560" height="620" fill="#f4f4f4"/>
  <g fill="none" stroke="#d0d2ec" stroke-width="0.9" opacity="0.75"><polyline points="1557.4,557.4 1555.6,558.0 1553.8,558.6 1552.0,559.2 1550.2,559.8 1548.3,560.5 1546.4,561.1 1544.6,561.8 1542.6,562.4 1540.7,563.1 1538.8,563.7 1536.8,564.4 1534.8,565.1 1532.8,565.8 1530.8,566.5 1528.8,567.2 1526.7,567.9 1524.7,568.6 1522.6,569.4 1520.5,570.1 1518.3,570.9 1516.2,571.6 1514.0,572.4 1511.9,573.2 1509.6,574.0 1507.4,574.8 1505.2,575.6 1502.9,576.4 1500.6,577.2 1498.3,578.0 1496.0,578.9 1493.7,579.7 1491.3,580.6 1488.9,581.5 1486.5,582.4 1484.1,583.3 1481.6,584.2 1479.2,585.1 1476.7,586.0 1474.2,587.0 1471.6,587.9 1469.1,588.9 1466.5,589.9 1463.9,590.8 1461.3,591.8 1458.7,592.9 1456.0,593.9 1453.3,594.9 1450.6,596.0 1447.9,597.0 1445.2,598.1 1442.4,599.2 1439.7,600.3 1436.9,601.4 1434.1,602.5 1431.2,603.7 1428.4,604.8 1425.5,606.0 1422.6,607.2 1419.7,608.4 1416.8,609.6 1413.9,610.8 1411.0,612.0 1408.0,613.3 1405.1,614.6 1402.1,615.8 1399.1,617.1 1396.1,618.4 1393.1,619.8 1390.0,621.1 1387.0,622.4 1384.0,623.8 1380.9,625.2 1377.9,626.6 1374.8,628.0 1371.8,629.4 1368.7,630.8 1365.7,632.2 1362.6,633.7 1359.5,635.2 1356.5,636.6 1353.4,638.1 1350.3,639.6 1347.3,641.1 1344.2,642.7 1341.2,644.2 1338.1,645.7 1335.1,647.3 1332.1,648.8 1329.0,650.4 1326.0,652.0 1323.0,653.6 1320.0,655.1 1317.0,656.7 1314.1,658.3 1311.1,660.0 1308.1,661.6 1305.2,663.2 1302.3,664.8 1299.4,666.5 1296.5,668.1"/><polyline points="1557.4,557.4 1559.4,557.9 1561.4,558.4 1563.4,559.0 1565.4,559.5 1567.4,560.1 1569.4,560.6 1571.5,561.2 1573.5,561.7 1575.6,562.3 1577.7,562.9 1579.8,563.5 1582.0,564.1 1584.1,564.7 1586.3,565.3 1588.5,565.9 1590.7,566.5 1592.9,567.1 1595.2,567.8 1597.4,568.4 1599.7,569.1 1602.0,569.7 1604.3,570.4 1606.6,571.0 1609.0,571.7 1611.4,572.4 1613.7,573.1 1616.1,573.8 1618.6,574.5 1621.0,575.2 1623.5,575.9 1625.9,576.7 1628.4,577.4 1631.0,578.2 1633.5,578.9 1636.0,579.7 1638.6,580.5 1641.2,581.3 1643.8,582.0 1646.4,582.8 1649.1,583.7 1651.7,584.5 1654.4,585.3 1657.1,586.1 1659.8,587.0 1662.5,587.9 1665.3,588.7 1668.1,589.6 1670.8,590.5 1673.6,591.4 1676.4,592.3 1679.3,593.2 1682.1,594.1 1685.0,595.1 1687.8,596.0 1690.7,597.0 1693.6,598.0 1696.5,598.9 1699.5,599.9 1702.4,600.9 1705.3,602.0 1708.3,603.0 1711.3,604.0 1714.2,605.1 1717.2,606.1 1720.2,607.2 1723.2,608.3 1726.2,609.4 1729.2,610.5 1732.2,611.6 1735.3,612.7 1738.3,613.8 1741.3,615.0 1744.3,616.1 1747.4,617.3 1750.4,618.4 1753.4,619.6 1756.4,620.8 1759.5,622.0 1762.5,623.2 1765.5,624.4 1768.5,625.7 1771.5,626.9 1774.5,628.2 1777.5,629.4 1780.5,630.7 1783.4,631.9 1786.4,633.2 1789.3,634.5 1792.3,635.8 1795.2,637.1 1798.1,638.3 1801.0,639.6 1803.9,641.0 1806.8,642.3 1809.7,643.6 1812.5,644.9 1815.4,646.2 1818.2,647.6 1821.0,648.9 1823.8,650.2"/><polyline points="1577.7,562.9 1576.0,563.5 1574.2,564.2 1572.4,564.8 1570.5,565.5 1568.7,566.2 1566.8,566.9 1565.0,567.6 1563.1,568.3 1561.2,569.0 1559.2,569.7 1557.3,570.4 1555.3,571.1 1553.3,571.9 1551.3,572.6 1549.3,573.4 1547.2,574.1 1545.2,574.9 1543.1,575.7 1541.0,576.5 1538.8,577.3 1536.7,578.1 1534.5,579.0 1532.3,579.8 1530.1,580.6 1527.8,581.5 1525.6,582.4 1523.3,583.2 1521.0,584.1 1518.7,585.0 1516.3,585.9 1513.9,586.9 1511.5,587.8 1509.1,588.7 1506.7,589.7 1504.2,590.7 1501.7,591.6 1499.2,592.6 1496.6,593.6 1494.1,594.7 1491.5,595.7 1488.9,596.7 1486.2,597.8 1483.5,598.8 1480.9,599.9 1478.1,601.0 1475.4,602.1 1472.6,603.3 1469.8,604.4 1467.0,605.5 1464.2,606.7 1461.3,607.9 1458.4,609.1 1455.5,610.3 1452.6,611.5 1449.6,612.7 1446.6,614.0 1443.6,615.3 1440.6,616.6 1437.5,617.9 1434.5,619.2 1431.4,620.5 1428.2,621.9 1425.1,623.2 1422.0,624.6 1418.8,626.0 1415.6,627.4 1412.4,628.8 1409.2,630.3 1405.9,631.7 1402.7,633.2 1399.4,634.7 1396.1,636.2 1392.8,637.7 1389.5,639.3 1386.2,640.8 1382.9,642.4 1379.6,644.0 1376.2,645.6 1372.9,647.2 1369.6,648.8 1366.2,650.5 1362.9,652.1 1359.6,653.8 1356.2,655.5 1352.9,657.2 1349.6,658.9 1346.3,660.6 1342.9,662.3 1339.6,664.0 1336.3,665.8 1333.1,667.5 1329.8,669.3 1326.5,671.0 1323.3,672.8 1320.0,674.6 1316.8,676.4 1313.6,678.2 1310.4,680.0 1307.2,681.8 1304.1,683.6"/><polyline points="1538.8,563.7 1540.7,564.3 1542.7,564.9 1544.7,565.4 1546.7,566.0 1548.8,566.6 1550.8,567.2 1552.9,567.8 1555.0,568.4 1557.1,569.0 1559.2,569.7 1561.4,570.3 1563.5,570.9 1565.7,571.6 1567.9,572.2 1570.2,572.9 1572.4,573.6 1574.7,574.3 1576.9,574.9 1579.3,575.6 1581.6,576.3 1583.9,577.0 1586.3,577.8 1588.7,578.5 1591.1,579.2 1593.5,580.0 1595.9,580.7 1598.4,581.5 1600.9,582.2 1603.4,583.0 1605.9,583.8 1608.5,584.6 1611.1,585.4 1613.7,586.2 1616.3,587.0 1618.9,587.9 1621.6,588.7 1624.3,589.6 1627.0,590.4 1629.7,591.3 1632.4,592.2 1635.2,593.1 1638.0,594.0 1640.8,594.9 1643.7,595.8 1646.5,596.7 1649.4,597.7 1652.3,598.6 1655.2,599.6 1658.2,600.6 1661.1,601.6 1664.1,602.6 1667.1,603.6 1670.1,604.6 1673.2,605.6 1676.2,606.7 1679.3,607.7 1682.4,608.8 1685.5,609.9 1688.6,611.0 1691.8,612.1 1694.9,613.2 1698.1,614.3 1701.3,615.5 1704.5,616.6 1707.7,617.8 1710.9,619.0 1714.2,620.2 1717.4,621.4 1720.7,622.6 1723.9,623.8 1727.2,625.1 1730.5,626.3 1733.8,627.6 1737.0,628.9 1740.3,630.1 1743.6,631.4 1746.9,632.7 1750.2,634.1 1753.5,635.4 1756.7,636.7 1760.0,638.1 1763.3,639.4 1766.5,640.8 1769.8,642.2 1773.0,643.5 1776.3,644.9 1779.5,646.3 1782.7,647.7 1785.9,649.1 1789.1,650.5 1792.3,652.0 1795.4,653.4 1798.6,654.8 1801.7,656.3 1804.8,657.7 1807.9,659.1 1811.0,660.6 1814.1,662.0 1817.1,663.5 1820.1,664.9"/><polyline points="1599.7,569.1 1598.0,569.7 1596.2,570.4 1594.5,571.1 1592.7,571.9 1590.9,572.6 1589.1,573.3 1587.2,574.1 1585.4,574.8 1583.5,575.6 1581.6,576.3 1579.7,577.1 1577.7,577.9 1575.7,578.7 1573.8,579.5 1571.8,580.3 1569.7,581.2 1567.7,582.0 1565.6,582.9 1563.5,583.7 1561.4,584.6 1559.3,585.5 1557.1,586.4 1554.9,587.3 1552.7,588.2 1550.5,589.1 1548.2,590.1 1545.9,591.0 1543.6,592.0 1541.3,593.0 1538.9,594.0 1536.5,595.0 1534.1,596.0 1531.7,597.0 1529.2,598.0 1526.7,599.1 1524.2,600.2 1521.7,601.2 1519.1,602.3 1516.5,603.5 1513.9,604.6 1511.2,605.7 1508.5,606.9 1505.8,608.0 1503.1,609.2 1500.3,610.4 1497.5,611.6 1494.7,612.8 1491.8,614.1 1488.9,615.4 1486.0,616.6 1483.0,617.9 1480.0,619.2 1477.0,620.6 1474.0,621.9 1470.9,623.3 1467.8,624.6 1464.7,626.0 1461.5,627.5 1458.3,628.9 1455.1,630.3 1451.8,631.8 1448.6,633.3 1445.3,634.8 1441.9,636.3 1438.6,637.9 1435.2,639.4 1431.8,641.0 1428.3,642.6 1424.9,644.2 1421.4,645.9 1417.9,647.5 1414.3,649.2 1410.8,650.9 1407.2,652.6 1403.7,654.3 1400.1,656.1 1396.5,657.9 1392.9,659.6 1389.2,661.4 1385.6,663.3 1382.0,665.1 1378.3,666.9 1374.7,668.8 1371.0,670.7 1367.4,672.6 1363.7,674.5 1360.1,676.4 1356.4,678.3 1352.8,680.2 1349.2,682.2 1345.6,684.1 1342.0,686.1 1338.4,688.1 1334.8,690.1 1331.3,692.0 1327.7,694.0 1324.2,696.0 1320.7,698.0 1317.2,700.0 1313.7,702.0"/><polyline points="1518.3,570.9 1520.3,571.5 1522.3,572.1 1524.3,572.7 1526.3,573.4 1528.3,574.0 1530.4,574.6 1532.5,575.3 1534.6,576.0 1536.7,576.6 1538.8,577.3 1541.0,578.0 1543.2,578.7 1545.4,579.4 1547.6,580.1 1549.8,580.8 1552.1,581.6 1554.4,582.3 1556.7,583.1 1559.0,583.8 1561.4,584.6 1563.8,585.4 1566.2,586.2 1568.6,587.0 1571.1,587.8 1573.5,588.6 1576.0,589.4 1578.5,590.2 1581.1,591.1 1583.6,591.9 1586.2,592.8 1588.9,593.7 1591.5,594.5 1594.2,595.4 1596.8,596.3 1599.6,597.3 1602.3,598.2 1605.1,599.1 1607.9,600.1 1610.7,601.0 1613.5,602.0 1616.4,603.0 1619.3,604.0 1622.2,605.0 1625.2,606.0 1628.1,607.0 1631.1,608.1 1634.2,609.1 1637.2,610.2 1640.3,611.2 1643.4,612.3 1646.5,613.4 1649.7,614.6 1652.9,615.7 1656.1,616.8 1659.3,618.0 1662.5,619.1 1665.8,620.3 1669.1,621.5 1672.5,622.7 1675.8,623.9 1679.2,625.2 1682.6,626.4 1686.0,627.7 1689.4,629.0 1692.8,630.3 1696.3,631.6 1699.8,632.9 1703.3,634.2 1706.8,635.6 1710.3,636.9 1713.9,638.3 1717.4,639.7 1721.0,641.1 1724.5,642.5 1728.1,643.9 1731.7,645.4 1735.3,646.8 1738.9,648.3 1742.4,649.7 1746.0,651.2 1749.6,652.7 1753.2,654.2 1756.7,655.7 1760.3,657.2 1763.9,658.8 1767.4,660.3 1770.9,661.9 1774.5,663.4 1778.0,665.0 1781.5,666.5 1784.9,668.1 1788.4,669.7 1791.8,671.3 1795.3,672.8 1798.7,674.4 1802.1,676.0 1805.4,677.6 1808.8,679.2 1812.1,680.8 1815.4,682.4"/><polyline points="1623.5,575.9 1621.8,576.7 1620.1,577.4 1618.4,578.2 1616.7,579.0 1615.0,579.7 1613.2,580.5 1611.4,581.3 1609.6,582.2 1607.8,583.0 1605.9,583.8 1604.1,584.7 1602.2,585.5 1600.3,586.4 1598.3,587.3 1596.4,588.2 1594.4,589.1 1592.4,590.0 1590.4,590.9 1588.3,591.8 1586.2,592.8 1584.1,593.8 1582.0,594.7 1579.9,595.7 1577.7,596.7 1575.5,597.7 1573.2,598.8 1571.0,599.8 1568.7,600.9 1566.4,601.9 1564.1,603.0 1561.7,604.1 1559.3,605.2 1556.9,606.4 1554.4,607.5 1551.9,608.7 1549.4,609.9 1546.9,611.0 1544.3,612.2 1541.7,613.5 1539.1,614.7 1536.4,616.0 1533.7,617.2 1531.0,618.5 1528.2,619.8 1525.4,621.2 1522.6,622.5 1519.7,623.9 1516.8,625.2 1513.9,626.6 1510.9,628.0 1507.9,629.5 1504.8,630.9 1501.8,632.4 1498.6,633.9 1495.5,635.4 1492.3,637.0 1489.1,638.5 1485.8,640.1 1482.5,641.7 1479.2,643.3 1475.8,644.9 1472.4,646.6 1468.9,648.3 1465.5,650.0 1461.9,651.7 1458.4,653.5 1454.8,655.3 1451.2,657.1 1447.5,658.9 1443.8,660.7 1440.1,662.6 1436.3,664.5 1432.5,666.4 1428.7,668.3 1424.9,670.3 1421.0,672.2 1417.1,674.2 1413.2,676.3 1409.3,678.3 1405.4,680.3 1401.4,682.4 1397.4,684.5 1393.4,686.6 1389.4,688.8 1385.4,690.9 1381.4,693.1 1377.4,695.2 1373.4,697.4 1369.4,699.6 1365.4,701.8 1361.4,704.1 1357.5,706.3 1353.5,708.5 1349.6,710.8 1345.6,713.0 1341.7,715.2 1337.8,717.5 1333.9,719.8 1330.1,722.0 1326.3,724.3"/><polyline points="1496.0,578.9 1497.9,579.6 1499.9,580.2 1501.9,580.9 1503.9,581.6 1505.9,582.3 1507.9,583.0 1510.0,583.7 1512.1,584.5 1514.2,585.2 1516.3,585.9 1518.5,586.7 1520.6,587.5 1522.8,588.2 1525.1,589.0 1527.3,589.8 1529.6,590.6 1531.9,591.4 1534.2,592.3 1536.5,593.1 1538.9,594.0 1541.3,594.8 1543.7,595.7 1546.2,596.6 1548.7,597.5 1551.2,598.4 1553.7,599.3 1556.2,600.2 1558.8,601.1 1561.4,602.1 1564.1,603.0 1566.7,604.0 1569.4,605.0 1572.1,606.0 1574.9,607.0 1577.6,608.0 1580.5,609.0 1583.3,610.1 1586.2,611.1 1589.0,612.2 1592.0,613.3 1594.9,614.4 1597.9,615.5 1600.9,616.6 1604.0,617.7 1607.0,618.9 1610.1,620.0 1613.3,621.2 1616.5,622.4 1619.7,623.6 1622.9,624.8 1626.2,626.0 1629.5,627.3 1632.8,628.6 1636.1,629.8 1639.5,631.1 1643.0,632.4 1646.4,633.8 1649.9,635.1 1653.4,636.4 1657.0,637.8 1660.5,639.2 1664.1,640.6 1667.8,642.0 1671.4,643.5 1675.1,644.9 1678.8,646.4 1682.6,647.8 1686.3,649.3 1690.1,650.9 1693.9,652.4 1697.7,653.9 1701.6,655.5 1705.4,657.1 1709.3,658.7 1713.2,660.3 1717.1,661.9 1721.0,663.5 1724.9,665.2 1728.9,666.8 1732.8,668.5 1736.7,670.2 1740.6,671.9 1744.6,673.6 1748.5,675.3 1752.4,677.0 1756.3,678.7 1760.2,680.4 1764.1,682.2 1767.9,683.9 1771.8,685.7 1775.6,687.4 1779.4,689.2 1783.2,691.0 1787.0,692.7 1790.7,694.5 1794.5,696.3 1798.1,698.0 1801.8,699.8 1805.5,701.6 1809.1,703.3"/><polyline points="1649.1,583.7 1647.5,584.5 1645.9,585.3 1644.3,586.1 1642.7,586.9 1641.0,587.8 1639.4,588.6 1637.7,589.5 1635.9,590.4 1634.2,591.3 1632.4,592.2 1630.7,593.1 1628.9,594.0 1627.0,595.0 1625.2,595.9 1623.3,596.9 1621.4,597.9 1619.5,598.9 1617.5,599.9 1615.5,601.0 1613.5,602.0 1611.5,603.1 1609.4,604.1 1607.4,605.2 1605.2,606.3 1603.1,607.4 1600.9,608.6 1598.7,609.7 1596.5,610.9 1594.3,612.1 1592.0,613.3 1589.7,614.5 1587.3,615.7 1584.9,617.0 1582.5,618.2 1580.1,619.5 1577.6,620.8 1575.1,622.1 1572.6,623.5 1570.0,624.8 1567.4,626.2 1564.7,627.6 1562.1,629.0 1559.4,630.5 1556.6,631.9 1553.8,633.4 1551.0,634.9 1548.1,636.4 1545.2,638.0 1542.3,639.5 1539.3,641.1 1536.3,642.7 1533.2,644.4 1530.1,646.0 1527.0,647.7 1523.8,649.4 1520.6,651.1 1517.3,652.9 1514.0,654.7 1510.6,656.5 1507.2,658.3 1503.8,660.2 1500.3,662.1 1496.7,664.0 1493.1,665.9 1489.5,667.9 1485.8,669.9 1482.1,671.9 1478.3,673.9 1474.5,676.0 1470.6,678.1 1466.7,680.2 1462.8,682.4 1458.8,684.6 1454.8,686.8 1450.7,689.0 1446.6,691.3 1442.4,693.6 1438.2,695.9 1434.0,698.3 1429.8,700.6 1425.5,703.0 1421.2,705.5 1416.8,707.9 1412.5,710.4 1408.1,712.8 1403.7,715.3 1399.3,717.8 1394.9,720.4 1390.5,722.9 1386.1,725.5 1381.7,728.0 1377.3,730.6 1373.0,733.1 1368.6,735.7 1364.2,738.3 1359.9,740.9 1355.6,743.5 1351.3,746.0 1347.0,748.6 1342.8,751.2"/><polyline points="1471.6,587.9 1473.5,588.6 1475.4,589.4 1477.3,590.1 1479.3,590.9 1481.2,591.7 1483.2,592.4 1485.3,593.2 1487.3,594.0 1489.4,594.9 1491.5,595.7 1493.6,596.5 1495.7,597.4 1497.9,598.2 1500.1,599.1 1502.3,600.0 1504.6,600.9 1506.9,601.8 1509.2,602.7 1511.5,603.6 1513.9,604.6 1516.3,605.5 1518.7,606.5 1521.1,607.5 1523.6,608.5 1526.1,609.5 1528.6,610.5 1531.2,611.5 1533.8,612.6 1536.4,613.6 1539.1,614.7 1541.8,615.8 1544.5,616.9 1547.2,618.0 1550.0,619.1 1552.8,620.3 1555.7,621.4 1558.5,622.6 1561.5,623.8 1564.4,625.0 1567.4,626.2 1570.4,627.5 1573.5,628.7 1576.5,630.0 1579.7,631.3 1582.8,632.6 1586.0,633.9 1589.2,635.2 1592.5,636.5 1595.8,637.9 1599.2,639.3 1602.5,640.7 1606.0,642.1 1609.4,643.5 1612.9,645.0 1616.4,646.4 1620.0,647.9 1623.6,649.4 1627.3,651.0 1631.0,652.5 1634.7,654.1 1638.5,655.6 1642.3,657.2 1646.1,658.9 1650.0,660.5 1653.9,662.2 1657.9,663.8 1661.8,665.5 1665.9,667.2 1669.9,669.0 1674.0,670.7 1678.1,672.5 1682.3,674.3 1686.5,676.1 1690.7,677.9 1694.9,679.7 1699.1,681.6 1703.4,683.5 1707.7,685.4 1712.0,687.3 1716.3,689.2 1720.6,691.1 1724.9,693.0 1729.2,695.0 1733.6,696.9 1737.9,698.9 1742.2,700.9 1746.5,702.9 1750.8,704.8 1755.1,706.8 1759.3,708.8 1763.6,710.8 1767.8,712.8 1772.0,714.8 1776.2,716.8 1780.3,718.8 1784.4,720.7 1788.5,722.7 1792.6,724.7 1796.6,726.7 1800.6,728.6"/><polyline points="1705.3,602.0 1704.1,602.9 1702.8,603.9 1701.5,604.8 1700.2,605.8 1698.8,606.8 1697.5,607.9 1696.1,608.9 1694.7,609.9 1693.2,611.0 1691.8,612.1 1690.3,613.2 1688.8,614.3 1687.3,615.5 1685.7,616.6 1684.1,617.8 1682.5,619.0 1680.9,620.2 1679.2,621.4 1677.5,622.7 1675.8,623.9 1674.1,625.2 1672.3,626.5 1670.5,627.9 1668.6,629.2 1666.8,630.6 1664.9,632.0 1662.9,633.4 1661.0,634.9 1659.0,636.3 1657.0,637.8 1654.9,639.3 1652.8,640.9 1650.7,642.4 1648.5,644.0 1646.3,645.6 1644.0,647.3 1641.8,648.9 1639.4,650.6 1637.1,652.3 1634.7,654.1 1632.3,655.8 1629.8,657.6 1627.3,659.5 1624.7,661.3 1622.1,663.2 1619.4,665.1 1616.7,667.1 1614.0,669.1 1611.2,671.1 1608.4,673.2 1605.5,675.2 1602.6,677.4 1599.6,679.5 1596.6,681.7 1593.5,683.9 1590.3,686.2 1587.1,688.5 1583.9,690.8 1580.6,693.2 1577.2,695.6 1573.8,698.1 1570.4,700.6 1566.8,703.1 1563.2,705.7 1559.6,708.3 1555.8,711.0 1552.1,713.7 1548.2,716.4 1544.3,719.2 1540.3,722.1 1536.2,725.0 1532.1,727.9 1527.9,730.9 1523.7,733.9 1519.3,737.0 1514.9,740.1 1510.5,743.3 1505.9,746.5 1501.3,749.8 1496.7,753.1 1491.9,756.4 1487.1,759.8 1482.3,763.2 1477.3,766.6 1472.4,770.1 1467.3,773.6 1462.3,777.1 1457.1,780.7 1452.0,784.2 1446.8,787.8 1441.6,791.4 1436.4,794.9 1431.1,798.5 1425.9,802.1 1420.6,805.6 1415.4,809.2 1410.1,812.7 1404.9,816.2 1399.7,819.6 1394.5,823.1"/><polyline points="1416.8,609.6 1418.5,610.5 1420.1,611.4 1421.8,612.3 1423.6,613.2 1425.3,614.2 1427.1,615.2 1428.9,616.1 1430.7,617.1 1432.6,618.1 1434.5,619.2 1436.4,620.2 1438.3,621.3 1440.3,622.3 1442.3,623.4 1444.4,624.5 1446.4,625.7 1448.6,626.8 1450.7,628.0 1452.9,629.1 1455.1,630.3 1457.3,631.5 1459.6,632.8 1461.9,634.0 1464.3,635.3 1466.7,636.6 1469.1,637.9 1471.6,639.2 1474.1,640.6 1476.6,641.9 1479.2,643.3 1481.8,644.7 1484.5,646.1 1487.2,647.6 1489.9,649.0 1492.7,650.5 1495.5,652.0 1498.4,653.6 1501.3,655.1 1504.2,656.7 1507.2,658.3 1510.2,659.9 1513.3,661.6 1516.5,663.3 1519.6,665.0 1522.9,666.7 1526.1,668.4 1529.4,670.2 1532.8,672.0 1536.2,673.8 1539.7,675.6 1543.2,677.5 1546.8,679.4 1550.4,681.3 1554.1,683.3 1557.8,685.3 1561.6,687.3 1565.4,689.3 1569.3,691.4 1573.2,693.5 1577.2,695.6 1581.3,697.8 1585.4,699.9 1589.6,702.2 1593.8,704.4 1598.1,706.7 1602.5,709.0 1606.9,711.3 1611.4,713.7 1615.9,716.1 1620.5,718.5 1625.2,721.0 1629.9,723.5 1634.6,726.0 1639.5,728.5 1644.3,731.1 1649.3,733.7 1654.2,736.3 1659.3,738.9 1664.3,741.5 1669.4,744.2 1674.6,746.9 1679.7,749.6 1684.9,752.3 1690.2,755.0 1695.4,757.7 1700.6,760.4 1705.9,763.1 1711.1,765.8 1716.4,768.6 1721.6,771.2 1726.9,773.9 1732.1,776.6 1737.2,779.2 1742.4,781.8 1747.5,784.4 1752.6,787.0 1757.6,789.6 1762.6,792.1 1767.6,794.6 1772.5,797.0"/><polyline points="1735.3,612.7 1734.2,613.7 1733.2,614.8 1732.1,615.8 1731.0,616.9 1729.9,618.0 1728.7,619.2 1727.5,620.3 1726.4,621.5 1725.2,622.6 1723.9,623.8 1722.7,625.0 1721.4,626.3 1720.1,627.5 1718.8,628.8 1717.4,630.1 1716.1,631.4 1714.7,632.8 1713.3,634.1 1711.8,635.5 1710.3,636.9 1708.8,638.4 1707.3,639.8 1705.7,641.3 1704.1,642.8 1702.5,644.3 1700.9,645.9 1699.2,647.5 1697.4,649.1 1695.7,650.7 1693.9,652.4 1692.1,654.1 1690.2,655.8 1688.3,657.6 1686.4,659.3 1684.4,661.2 1682.4,663.0 1680.4,664.9 1678.3,666.8 1676.2,668.7 1674.0,670.7 1671.8,672.7 1669.5,674.8 1667.3,676.9 1664.9,679.0 1662.5,681.2 1660.1,683.3 1657.6,685.6 1655.1,687.9 1652.5,690.2 1649.9,692.5 1647.2,694.9 1644.4,697.4 1641.6,699.8 1638.8,702.4 1635.9,704.9 1632.9,707.6 1629.9,710.2 1626.8,712.9 1623.7,715.7 1620.5,718.5 1617.2,721.4 1613.9,724.3 1610.5,727.3 1607.1,730.3 1603.5,733.3 1599.9,736.5 1596.3,739.7 1592.5,742.9 1588.7,746.2 1584.8,749.5 1580.8,753.0 1576.8,756.4 1572.7,759.9 1568.4,763.5 1564.2,767.2 1559.8,770.9 1555.3,774.6 1550.8,778.5 1546.2,782.3 1541.4,786.2 1536.7,790.2 1531.8,794.2 1526.8,798.3 1521.8,802.4 1516.7,806.5 1511.5,810.7 1506.3,814.9 1500.9,819.1 1495.6,823.4 1490.1,827.6 1484.7,831.8 1479.1,836.1 1473.6,840.3 1468.0,844.5 1462.4,848.7 1456.7,852.8 1451.1,856.9 1445.5,861.0 1439.8,865.0 1434.2,869.0"/><polyline points="1387.0,622.4 1388.5,623.4 1389.9,624.5 1391.4,625.5 1392.9,626.5 1394.5,627.6 1396.1,628.7 1397.7,629.8 1399.3,630.9 1401.0,632.1 1402.7,633.2 1404.4,634.4 1406.1,635.6 1407.9,636.8 1409.7,638.0 1411.6,639.3 1413.5,640.6 1415.4,641.9 1417.4,643.2 1419.3,644.5 1421.4,645.9 1423.4,647.2 1425.5,648.7 1427.7,650.1 1429.9,651.5 1432.1,653.0 1434.3,654.5 1436.7,656.0 1439.0,657.6 1441.4,659.1 1443.8,660.7 1446.3,662.3 1448.8,664.0 1451.4,665.6 1454.0,667.3 1456.6,669.1 1459.3,670.8 1462.1,672.6 1464.9,674.4 1467.7,676.2 1470.6,678.1 1473.6,680.0 1476.6,681.9 1479.6,683.9 1482.7,685.9 1485.9,687.9 1489.1,689.9 1492.4,692.0 1495.7,694.1 1499.1,696.2 1502.5,698.4 1506.0,700.6 1509.6,702.9 1513.2,705.1 1516.9,707.5 1520.6,709.8 1524.4,712.2 1528.3,714.6 1532.2,717.1 1536.2,719.6 1540.3,722.1 1544.4,724.7 1548.6,727.3 1552.9,729.9 1557.2,732.6 1561.7,735.3 1566.1,738.1 1570.7,740.9 1575.3,743.7 1580.0,746.6 1584.8,749.5 1589.7,752.5 1594.6,755.5 1599.6,758.5 1604.6,761.6 1609.8,764.7 1615.0,767.8 1620.3,771.0 1625.6,774.1 1631.0,777.3 1636.5,780.5 1642.0,783.8 1647.5,787.0 1653.2,790.3 1658.8,793.5 1664.5,796.8 1670.2,800.0 1675.9,803.3 1681.7,806.5 1687.4,809.7 1693.2,812.8 1698.9,816.0 1704.6,819.1 1710.4,822.2 1716.1,825.2 1721.7,828.2 1727.3,831.1 1732.9,834.0 1738.5,836.9 1744.0,839.7 1749.4,842.4"/><polyline points="1765.5,624.4 1764.7,625.6 1763.9,626.7 1763.0,627.9 1762.2,629.1 1761.3,630.3 1760.4,631.6 1759.5,632.8 1758.6,634.1 1757.7,635.4 1756.7,636.7 1755.8,638.1 1754.8,639.4 1753.7,640.8 1752.7,642.2 1751.7,643.7 1750.6,645.1 1749.5,646.6 1748.3,648.1 1747.2,649.6 1746.0,651.2 1744.8,652.8 1743.6,654.4 1742.3,656.1 1741.1,657.8 1739.8,659.5 1738.4,661.2 1737.1,663.0 1735.7,664.8 1734.2,666.6 1732.8,668.5 1731.3,670.4 1729.8,672.3 1728.2,674.3 1726.6,676.3 1725.0,678.4 1723.3,680.4 1721.6,682.6 1719.9,684.7 1718.1,686.9 1716.3,689.2 1714.4,691.5 1712.5,693.8 1710.5,696.2 1708.5,698.6 1706.5,701.1 1704.4,703.6 1702.3,706.1 1700.1,708.7 1697.8,711.4 1695.5,714.1 1693.2,716.9 1690.8,719.7 1688.3,722.5 1685.8,725.5 1683.2,728.4 1680.6,731.5 1677.9,734.6 1675.1,737.7 1672.3,740.9 1669.4,744.2 1666.5,747.5 1663.4,750.9 1660.3,754.4 1657.2,757.9 1653.9,761.5 1650.6,765.2 1647.2,768.9 1643.7,772.7 1640.1,776.6 1636.5,780.5 1632.7,784.6 1628.9,788.6 1625.0,792.8 1621.0,797.0 1616.9,801.3 1612.7,805.6 1608.4,810.1 1604.0,814.6 1599.5,819.1 1595.0,823.7 1590.3,828.4 1585.5,833.1 1580.6,837.8 1575.7,842.6 1570.6,847.5 1565.5,852.3 1560.2,857.2 1554.9,862.1 1549.5,867.0 1544.0,872.0 1538.4,876.9 1532.8,881.8 1527.1,886.6 1521.3,891.5 1515.5,896.3 1509.6,901.0 1503.7,905.8 1497.8,910.4 1491.9,915.0 1485.9,919.6"/><polyline points="1356.5,636.6 1357.7,637.8 1358.9,638.9 1360.1,640.1 1361.4,641.3 1362.7,642.5 1364.0,643.7 1365.4,645.0 1366.7,646.2 1368.1,647.5 1369.6,648.8 1371.0,650.2 1372.5,651.5 1374.0,652.9 1375.6,654.3 1377.2,655.7 1378.8,657.2 1380.4,658.7 1382.1,660.2 1383.8,661.7 1385.6,663.3 1387.4,664.8 1389.2,666.4 1391.1,668.1 1393.0,669.7 1395.0,671.4 1396.9,673.2 1399.0,674.9 1401.1,676.7 1403.2,678.5 1405.4,680.3 1407.6,682.2 1409.8,684.1 1412.1,686.1 1414.5,688.1 1416.9,690.1 1419.4,692.1 1421.9,694.2 1424.5,696.3 1427.1,698.5 1429.8,700.6 1432.5,702.9 1435.3,705.1 1438.1,707.4 1441.0,709.8 1444.0,712.2 1447.1,714.6 1450.2,717.0 1453.3,719.5 1456.5,722.1 1459.8,724.7 1463.2,727.3 1466.6,730.0 1470.1,732.7 1473.7,735.5 1477.3,738.3 1481.0,741.2 1484.8,744.1 1488.7,747.0 1492.6,750.0 1496.7,753.1 1500.8,756.2 1504.9,759.3 1509.2,762.5 1513.6,765.8 1518.0,769.0 1522.5,772.4 1527.1,775.8 1531.8,779.2 1536.6,782.7 1541.4,786.2 1546.4,789.8 1551.4,793.5 1556.6,797.1 1561.8,800.8 1567.1,804.6 1572.5,808.3 1578.0,812.2 1583.6,816.0 1589.2,819.8 1595.0,823.7 1600.8,827.6 1606.6,831.5 1612.6,835.4 1618.6,839.2 1624.6,843.1 1630.7,846.9 1636.9,850.7 1643.0,854.5 1649.2,858.3 1655.5,862.0 1661.7,865.6 1667.9,869.2 1674.1,872.7 1680.3,876.2 1686.5,879.6 1692.7,882.9 1698.9,886.2 1705.0,889.4 1711.0,892.6 1717.1,895.6"/><polyline points="1795.2,637.1 1794.7,638.3 1794.1,639.6 1793.5,640.9 1792.9,642.2 1792.3,643.5 1791.7,644.9 1791.1,646.3 1790.4,647.7 1789.8,649.1 1789.1,650.5 1788.4,652.0 1787.7,653.5 1787.0,655.1 1786.3,656.6 1785.5,658.2 1784.7,659.8 1783.9,661.4 1783.1,663.1 1782.3,664.8 1781.5,666.5 1780.6,668.3 1779.7,670.1 1778.8,671.9 1777.9,673.8 1776.9,675.7 1775.9,677.6 1774.9,679.6 1773.9,681.6 1772.9,683.6 1771.8,685.7 1770.7,687.8 1769.5,690.0 1768.4,692.2 1767.2,694.4 1766.0,696.7 1764.7,699.0 1763.4,701.4 1762.1,703.8 1760.7,706.3 1759.3,708.8 1757.9,711.4 1756.4,714.0 1754.9,716.7 1753.4,719.4 1751.8,722.2 1750.1,725.0 1748.4,727.9 1746.7,730.9 1744.9,733.9 1743.1,736.9 1741.2,740.1 1739.3,743.3 1737.3,746.5 1735.2,749.8 1733.1,753.2 1730.9,756.7 1728.7,760.2 1726.4,763.8 1724.1,767.5 1721.6,771.2 1719.1,775.1 1716.6,778.9 1713.9,782.9 1711.2,787.0 1708.4,791.1 1705.5,795.3 1702.6,799.5 1699.5,803.9 1696.4,808.3 1693.2,812.8 1689.9,817.4 1686.4,822.1 1682.9,826.8 1679.3,831.6 1675.6,836.5 1671.8,841.5 1667.9,846.5 1663.8,851.6 1659.7,856.7 1655.5,862.0 1651.1,867.2 1646.6,872.5 1642.0,877.9 1637.3,883.3 1632.5,888.7 1627.6,894.2 1622.6,899.6 1617.5,905.1 1612.2,910.6 1606.9,916.1 1601.5,921.6 1595.9,927.1 1590.3,932.5 1584.6,938.0 1578.8,943.4 1573.0,948.7 1567.1,954.0 1561.1,959.3 1555.0,964.5 1548.9,969.7"/><polyline points="1326.0,652.0 1327.0,653.3 1327.9,654.5 1328.9,655.9 1329.9,657.2 1330.9,658.6 1331.9,660.0 1333.0,661.4 1334.1,662.8 1335.2,664.3 1336.3,665.8 1337.5,667.3 1338.7,668.8 1339.9,670.4 1341.1,672.0 1342.4,673.6 1343.7,675.3 1345.0,677.0 1346.4,678.7 1347.8,680.4 1349.2,682.2 1350.6,684.0 1352.1,685.8 1353.7,687.7 1355.2,689.6 1356.8,691.6 1358.5,693.5 1360.1,695.6 1361.9,697.6 1363.6,699.7 1365.4,701.8 1367.3,704.0 1369.2,706.2 1371.1,708.5 1373.1,710.8 1375.1,713.1 1377.2,715.5 1379.4,717.9 1381.6,720.4 1383.8,722.9 1386.1,725.5 1388.5,728.1 1390.9,730.7 1393.4,733.4 1396.0,736.2 1398.6,739.0 1401.3,741.9 1404.0,744.8 1406.9,747.7 1409.8,750.8 1412.7,753.8 1415.8,757.0 1418.9,760.2 1422.1,763.4 1425.4,766.7 1428.7,770.1 1432.2,773.5 1435.7,777.0 1439.3,780.5 1443.0,784.1 1446.8,787.8 1450.7,791.5 1454.7,795.3 1458.8,799.1 1462.9,803.0 1467.2,807.0 1471.6,811.0 1476.1,815.1 1480.7,819.2 1485.3,823.4 1490.1,827.6 1495.0,831.9 1500.0,836.2 1505.2,840.6 1510.4,845.0 1515.7,849.4 1521.2,853.9 1526.7,858.4 1532.4,862.9 1538.1,867.4 1544.0,872.0 1549.9,876.5 1556.0,881.0 1562.1,885.5 1568.3,890.0 1574.6,894.5 1580.9,898.9 1587.3,903.3 1593.8,907.6 1600.3,911.9 1606.9,916.1 1613.5,920.3 1620.1,924.4 1626.8,928.4 1633.4,932.3 1640.1,936.2 1646.8,940.0 1653.5,943.7 1660.1,947.3 1666.8,950.9 1673.4,954.4"/><polyline points="1823.8,650.2 1823.5,651.6 1823.1,653.0 1822.8,654.4 1822.4,655.8 1822.1,657.3 1821.7,658.8 1821.3,660.3 1820.9,661.8 1820.5,663.3 1820.1,664.9 1819.7,666.5 1819.3,668.2 1818.8,669.9 1818.4,671.6 1817.9,673.3 1817.4,675.0 1816.9,676.8 1816.4,678.7 1815.9,680.5 1815.4,682.4 1814.8,684.3 1814.3,686.3 1813.7,688.3 1813.1,690.3 1812.5,692.4 1811.8,694.5 1811.2,696.6 1810.5,698.8 1809.8,701.1 1809.1,703.3 1808.3,705.6 1807.6,708.0 1806.8,710.4 1806.0,712.9 1805.1,715.4 1804.3,717.9 1803.4,720.5 1802.5,723.2 1801.5,725.9 1800.6,728.6 1799.6,731.4 1798.5,734.3 1797.4,737.2 1796.3,740.2 1795.2,743.3 1794.0,746.4 1792.8,749.5 1791.5,752.8 1790.2,756.1 1788.9,759.4 1787.5,762.9 1786.0,766.4 1784.5,770.0 1783.0,773.6 1781.4,777.3 1779.7,781.1 1778.0,785.0 1776.2,788.9 1774.4,792.9 1772.5,797.0 1770.5,801.2 1768.5,805.5 1766.4,809.8 1764.2,814.2 1762.0,818.7 1759.6,823.3 1757.2,828.0 1754.7,832.7 1752.1,837.5 1749.4,842.4 1746.6,847.4 1743.8,852.5 1740.8,857.6 1737.7,862.8 1734.6,868.1 1731.3,873.5 1727.9,878.9 1724.4,884.4 1720.8,890.0 1717.1,895.6 1713.2,901.3 1709.3,907.1 1705.2,912.8 1701.0,918.7 1696.7,924.5 1692.3,930.5 1687.7,936.4 1683.1,942.4 1678.3,948.4 1673.4,954.4 1668.4,960.4 1663.3,966.4 1658.1,972.4 1652.7,978.5 1647.3,984.5 1641.8,990.5 1636.1,996.6 1630.4,1002.6 1624.6,1008.6 1618.7,1014.5"/><polyline points="1296.5,668.1 1297.1,669.5 1297.8,671.0 1298.6,672.5 1299.3,674.0 1300.0,675.5 1300.8,677.1 1301.6,678.7 1302.4,680.3 1303.2,681.9 1304.1,683.6 1304.9,685.3 1305.8,687.0 1306.7,688.8 1307.7,690.6 1308.6,692.4 1309.6,694.3 1310.6,696.1 1311.6,698.1 1312.7,700.0 1313.7,702.0 1314.9,704.1 1316.0,706.2 1317.2,708.3 1318.4,710.4 1319.6,712.6 1320.9,714.9 1322.2,717.2 1323.5,719.5 1324.9,721.8 1326.3,724.3 1327.7,726.7 1329.2,729.2 1330.7,731.8 1332.3,734.4 1333.9,737.1 1335.6,739.8 1337.3,742.5 1339.1,745.4 1340.9,748.2 1342.8,751.2 1344.7,754.2 1346.7,757.2 1348.7,760.3 1350.8,763.5 1353.0,766.7 1355.2,770.0 1357.5,773.4 1359.9,776.8 1362.3,780.3 1364.8,783.8 1367.4,787.4 1370.1,791.1 1372.8,794.9 1375.6,798.7 1378.5,802.6 1381.5,806.5 1384.6,810.6 1387.8,814.7 1391.1,818.8 1394.5,823.1 1398.0,827.4 1401.5,831.7 1405.2,836.2 1409.0,840.7 1412.9,845.3 1416.9,849.9 1421.1,854.6 1425.3,859.3 1429.7,864.2 1434.2,869.0 1438.8,873.9 1443.5,878.9 1448.4,883.9 1453.4,888.9 1458.5,894.0 1463.7,899.1 1469.1,904.2 1474.6,909.3 1480.2,914.4 1485.9,919.6 1491.7,924.7 1497.7,929.8 1503.8,934.9 1509.9,940.0 1516.2,945.1 1522.6,950.1 1529.0,955.1 1535.6,960.0 1542.2,964.9 1548.9,969.7 1555.7,974.5 1562.5,979.2 1569.4,983.8 1576.3,988.4 1583.3,992.9 1590.3,997.4 1597.4,1001.8 1604.5,1006.1 1611.6,1010.3 1618.7,1014.5"/></g><g fill="none" stroke="#a0a0a0" stroke-width="0.9"><polyline points="1676.4,592.3 1675.0,593.2 1673.6,594.0 1672.1,594.9 1670.6,595.8 1669.1,596.8 1667.5,597.7 1665.9,598.6 1664.4,599.6 1662.7,600.6 1661.1,601.6 1659.5,602.6 1657.8,603.6 1656.1,604.6 1654.3,605.7 1652.6,606.8 1650.8,607.8 1649.0,608.9 1647.1,610.1 1645.3,611.2 1643.4,612.3 1641.5,613.5 1639.5,614.7 1637.6,615.9 1635.5,617.1 1633.5,618.3 1631.5,619.6 1629.4,620.9 1627.2,622.2 1625.1,623.5 1622.9,624.8 1620.7,626.2 1618.4,627.5 1616.1,628.9 1613.8,630.3 1611.5,631.8 1609.1,633.2 1606.6,634.7 1604.2,636.2 1601.7,637.7 1599.2,639.3 1596.6,640.9 1594.0,642.4 1591.3,644.1 1588.6,645.7 1585.9,647.4 1583.1,649.1 1580.3,650.8 1577.5,652.5 1574.6,654.3 1571.6,656.1 1568.7,657.9 1565.6,659.8 1562.6,661.6 1559.4,663.6 1556.3,665.5 1553.0,667.5 1549.8,669.5 1546.5,671.5 1543.1,673.6 1539.7,675.6 1536.2,677.8 1532.7,679.9 1529.1,682.1 1525.5,684.3 1521.8,686.6 1518.1,688.9 1514.3,691.2 1510.4,693.6 1506.5,696.0 1502.5,698.4 1498.5,700.9 1494.4,703.4 1490.3,705.9 1486.1,708.5 1481.9,711.1 1477.6,713.8 1473.2,716.4 1468.8,719.2 1464.3,721.9 1459.8,724.7 1455.3,727.5 1450.7,730.3 1446.0,733.2 1441.4,736.1 1436.7,739.0 1431.9,741.9 1427.1,744.9 1422.4,747.9 1417.5,750.9 1412.7,753.8 1407.9,756.9 1403.1,759.9 1398.2,762.9 1393.4,765.9 1388.6,768.9 1383.8,771.9 1379.0,774.9 1374.3,777.9 1369.5,780.9 1364.8,783.8"/><polyline points="1445.2,598.1 1447.0,598.9 1448.8,599.7 1450.6,600.6 1452.5,601.4 1454.4,602.2 1456.3,603.1 1458.2,604.0 1460.2,604.9 1462.2,605.8 1464.2,606.7 1466.2,607.6 1468.3,608.6 1470.4,609.5 1472.5,610.5 1474.7,611.5 1476.9,612.5 1479.1,613.5 1481.4,614.5 1483.7,615.6 1486.0,616.6 1488.3,617.7 1490.7,618.8 1493.1,619.9 1495.5,621.0 1498.0,622.1 1500.5,623.3 1503.1,624.5 1505.6,625.6 1508.2,626.8 1510.9,628.0 1513.6,629.3 1516.3,630.5 1519.0,631.8 1521.8,633.1 1524.6,634.4 1527.5,635.7 1530.4,637.0 1533.3,638.4 1536.3,639.7 1539.3,641.1 1542.4,642.5 1545.4,644.0 1548.6,645.4 1551.7,646.9 1555.0,648.4 1558.2,649.9 1561.5,651.4 1564.8,652.9 1568.2,654.5 1571.6,656.1 1575.1,657.7 1578.6,659.3 1582.2,661.0 1585.8,662.6 1589.4,664.3 1593.1,666.1 1596.9,667.8 1600.7,669.6 1604.5,671.3 1608.4,673.2 1612.3,675.0 1616.3,676.8 1620.3,678.7 1624.4,680.6 1628.5,682.5 1632.7,684.5 1636.9,686.5 1641.2,688.5 1645.5,690.5 1649.9,692.5 1654.3,694.6 1658.7,696.7 1663.2,698.8 1667.7,700.9 1672.3,703.1 1676.9,705.2 1681.5,707.4 1686.2,709.6 1690.8,711.9 1695.5,714.1 1700.3,716.3 1705.0,718.6 1709.8,720.9 1714.5,723.2 1719.3,725.5 1724.1,727.7 1728.8,730.0 1733.6,732.3 1738.3,734.6 1743.1,736.9 1747.8,739.2 1752.5,741.5 1757.1,743.8 1761.8,746.1 1766.4,748.3 1771.0,750.6 1775.5,752.8 1780.0,755.0 1784.4,757.3 1788.9,759.4"/></g>
  <g fill="none" stroke="#e4a4b4" stroke-width="0.9">
  <polyline points="1567.4,589.2 1503.4,617.4 1578.1,650.6 1638.9,613.8 1567.4,589.2"/>
  <polyline points="1567.3,659.8 1510.8,694.5 1576.4,734.2 1630.7,689.9 1567.3,659.8"/>
  <line x1="1567.4" y1="589.2" x2="1567.3" y2="659.8"/>
  <line x1="1503.4" y1="617.4" x2="1510.8" y2="694.5"/>
  <line x1="1578.1" y1="650.6" x2="1576.4" y2="734.2"/>
  <line x1="1638.9" y1="613.8" x2="1630.7" y2="689.9"/>
  </g>
  <g transform="translate(2654,0) scale(-1,1)">
  <use href="#lensL" fill="none" stroke="#9494a0" stroke-width="12" filter="url(#blur4)"/>
  <use href="#lensL" fill="none" stroke="#909000" stroke-width="7"/>
  <use href="#lensL" fill="none" stroke="#6a0000" stroke-width="2"/>
  </g>
 </g>
</g>
</svg>

</body></html>
